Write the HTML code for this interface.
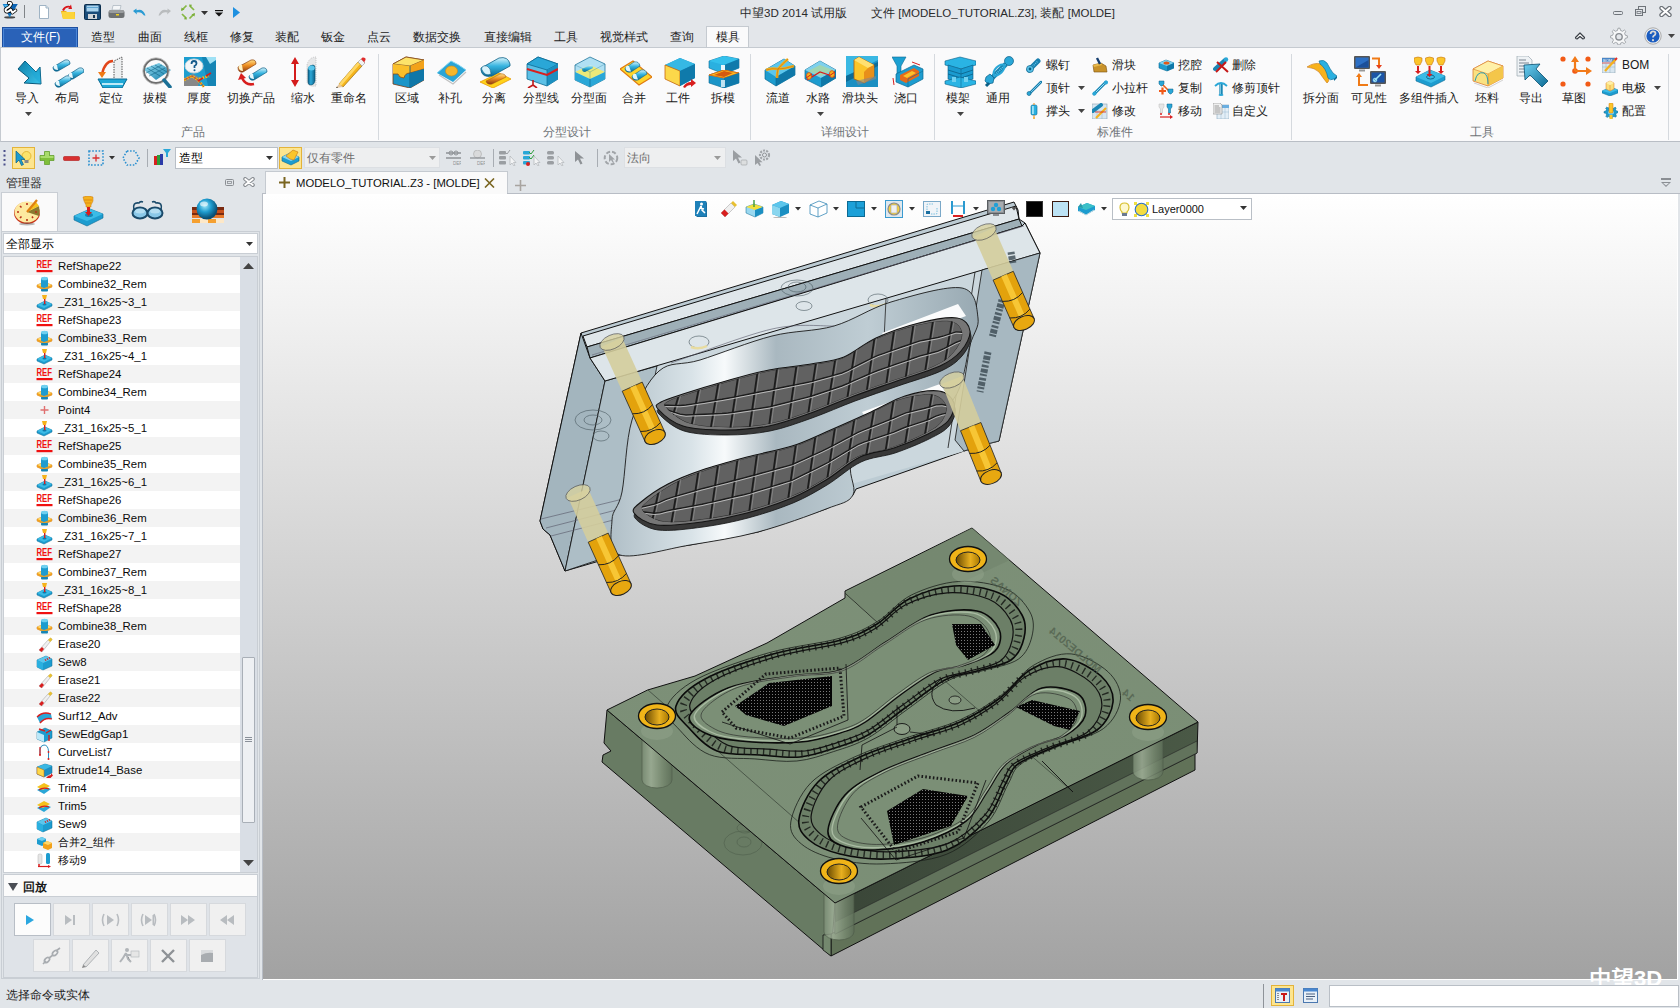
<!DOCTYPE html>
<html><head><meta charset="utf-8">
<style>

*{box-sizing:border-box;margin:0;padding:0}
html,body{width:1680px;height:1008px;overflow:hidden;background:#e1e5e9;font-family:"Liberation Sans",sans-serif;font-size:12px;color:#1e1e1e}
.a{position:absolute}
.t{position:absolute;white-space:nowrap;line-height:14px}
#title{left:0;top:0;width:1680px;height:26px;background:#e3e6ea}
#menu{left:0;top:26px;width:1680px;height:21px;background:#e3e6ea}
#ribbon{left:0;top:47px;width:1680px;height:95px;background:#fafafb;border-top:1px solid #c5cad0;border-bottom:1px solid #b9bec5;border-left:1px solid #c5cad0}
.sep{position:absolute;top:6px;width:1px;height:86px;background:#d5d9de}
.lbl{position:absolute;white-space:nowrap;line-height:14px;color:#1a1a1a}
.glbl{position:absolute;white-space:nowrap;line-height:14px;color:#6f7377;top:77px}
#tb{left:0;top:142px;width:1680px;height:30px;background:#e1e5e9}
#mgr{left:0;top:172px;width:262px;height:808px;background:#e1e5e9}
#doc{left:262px;top:172px;width:1418px;height:22px;background:#e1e5e9}
#vp{left:263px;top:194px;width:1415px;height:786px;background:linear-gradient(#ffffff 0%,#a2a2a2 100%)}
#status{left:0;top:980px;width:1680px;height:28px;background:#e1e5e9}
.row{position:absolute;left:5px;width:234px;height:18px}
.row span{position:absolute;left:53px;top:2px;line-height:14px}
.ic{position:absolute}

</style></head><body>
<div id="title" class="a">
<svg class="ic" style="left:0px;top:0px" width="22" height="22" viewBox="0 0 22 22">
<defs><linearGradient id="lg_logo" x1="0" y1="0" x2="1" y2="1"><stop offset="0" stop-color="#1a8ad8"/><stop offset=".5" stop-color="#0a5fb0"/><stop offset="1" stop-color="#30b8f0"/></linearGradient></defs>
<ellipse cx="9.7" cy="17.4" rx="5.5" ry="1.1" fill="#222" opacity=".8"/>
<path d="M2.6 3.9 L17.8 3.9 L9.6 17.6 Z" fill="url(#lg_logo)"/>
<path d="M4 5 L9 5 L7 9Z" fill="#5ad0ff" opacity=".7"/>
<path d="M8.6 3 Q10.8 2.4 11.2 3.8 Q10.8 5.5 8.8 7.2 Q6.5 8.2 5.5 9.6 Q5.2 11.5 7.2 11.8 Q9.5 11.2 10.8 9.4 L12.4 12.8 L15.6 10.2" fill="none" stroke="#000" stroke-width="3.4" stroke-linejoin="round" stroke-linecap="round"/>
<path d="M8.6 3 Q10.8 2.4 11.2 3.8 Q10.8 5.5 8.8 7.2 Q6.5 8.2 5.5 9.6 Q5.2 11.5 7.2 11.8 Q9.5 11.2 10.8 9.4 L12.4 12.8 L15.6 10.2" fill="none" stroke="#fff" stroke-width="1.9" stroke-linejoin="round" stroke-linecap="round"/>
</svg>
<div class="a" style="left:24px;top:5px;width:1px;height:13px;background:#808488"></div>
<svg class="ic" style="left:38px;top:5px" width="12" height="14" viewBox="0 0 12 14"><path d="M1.5 .5 H8 L10.5 3 V13.5 H1.5 Z" fill="#fff" stroke="#9fb3c4"/><path d="M8 .5 V3 H10.5" fill="#dfe8ef" stroke="#9fb3c4"/></svg>
<svg class="ic" style="left:60px;top:4px" width="16" height="16" viewBox="0 0 16 16"><path d="M1 7 H6 L7 8 H15 V15 H3 Z" fill="#f2b21a"/><path d="M1.5 8 H14.5 L15 15 H3 Z" fill="#fcd439"/><path d="M2 6 Q5 1 10 2 L11 .5 L12 5 L8 5 L9.5 3.6 Q5.5 3 4 7 Z" fill="#d8161b"/></svg>
<svg class="ic" style="left:84px;top:4px" width="17" height="16" viewBox="0 0 17 16"><rect x=".5" y=".5" width="16" height="15" rx="1" fill="#1a4c7a" stroke="#0b2d4c"/><rect x="2.5" y="1.5" width="12" height="6" fill="#a9d3ee"/><rect x="2.5" y="3" width="12" height="1" fill="#5fa5d3"/><rect x="4" y="10" width="9" height="5" fill="#d0d4d8"/><rect x="9" y="11" width="2" height="3" fill="#1a3550"/></svg>
<svg class="ic" style="left:108px;top:5px" width="17" height="14" viewBox="0 0 17 14"><path d="M5 .5 H13 L12 5 H4 Z" fill="#f4f6f8" stroke="#a8b2bc" stroke-width=".7"/><rect x=".5" y="5" width="16" height="8" rx="2.5" fill="#6e7173"/><rect x="1" y="5" width="15" height="3" rx="1.5" fill="#9a9d9f"/><rect x="8" y="9" width="3" height="1.5" fill="#f1d21e"/></svg>
<svg class="ic" style="left:132px;top:7px" width="15" height="9" viewBox="0 0 15 9"><path d="M1 4 L4.5 1.5 L4.5 3.3 Q11 1 13.5 8.5 L12 8.5 Q9 4 4.5 5.5 L5 7.5 Z" fill="#2a9bd3"/></svg>
<svg class="ic" style="left:157px;top:7px" width="15" height="9" viewBox="0 0 15 9"><path d="M14 4 L10.5 1.5 L10.5 3.3 Q4 1 1.5 8.5 L3 8.5 Q6 4 10.5 5.5 L10 7.5 Z" fill="#b9bcbe"/></svg>
<svg class="ic" style="left:179px;top:3px" width="18" height="18" viewBox="0 0 18 18"><g fill="none" stroke="#86b845" stroke-width="1.7"><path d="M3 7 L7.5 2.5"/><path d="M10.5 2.5 L15 7"/><path d="M15 11 L10.5 15.5"/><path d="M7.5 15.5 L3 11"/></g><g fill="#7aae38"><path d="M2 8 L2.5 4.5 L5.5 6.5Z"/><path d="M10 1.5 L13 1.8 L11.5 4.5Z"/><path d="M16 10 L15.5 13.5 L12.5 11.5Z"/><path d="M8 16.5 L5 16.2 L6.5 13.5Z"/></g></svg>
<svg class="ic" style="left:201px;top:11px" width="7" height="4"><path d="M0 0 H7 L3.5 4Z" fill="#333"/></svg>
<svg class="ic" style="left:215px;top:10px" width="8" height="7"><rect x="0" y="0" width="8" height="1.2" fill="#111"/><path d="M0 2.5 H8 L4 6.5Z" fill="#111"/></svg>
<svg class="ic" style="left:233px;top:7px" width="7" height="11"><path d="M0 0 L7 5.5 L0 11Z" fill="#1e90e0"/></svg>
<div class="t" style="left:740px;top:6px;color:#2a2a2a;font-size:11.6px">中望3D 2014 试用版</div>
<div class="t" style="left:871px;top:6px;color:#2a2a2a;font-size:11.5px">文件 [MODELO_TUTORIAL.Z3], 装配 [MOLDE]</div>
<svg class="ic" style="left:1612px;top:10px" width="12" height="6"><rect x="1.5" y="1.5" width="9" height="3" rx="1" fill="none" stroke="#6f747a"/></svg>
<svg class="ic" style="left:1634px;top:5px" width="12" height="12"><rect x="4.5" y="1.5" width="7" height="6" fill="none" stroke="#6f747a"/><rect x="1.5" y="4.5" width="7" height="6" fill="#e3e6ea" stroke="#6f747a"/><rect x="3" y="6.5" width="4" height="2" fill="none" stroke="#6f747a" stroke-width=".8"/></svg>
<svg class="ic" style="left:1659px;top:6px" width="13" height="11"><path d="M2.5 2 L10.5 9 M10.5 2 L2.5 9" stroke="#6f747a" stroke-width="4.4" stroke-linecap="round"/><path d="M2.5 2 L10.5 9 M10.5 2 L2.5 9" stroke="#fff" stroke-width="2" stroke-linecap="round"/></svg>
</div>
<div id="menu" class="a">
<div class="a" style="left:2px;top:1px;width:76px;height:21px;background:#2a62b8;border:1px solid #1d4fa0;border-bottom:none;box-shadow:inset 0 0 0 1px #4a86d8"></div>
<div class="t" style="left:21px;top:4px;color:#fff">文件(F)</div>
<div class="t" style="left:91px;top:4px;color:#222">造型</div>
<div class="t" style="left:138px;top:4px;color:#222">曲面</div>
<div class="t" style="left:184px;top:4px;color:#222">线框</div>
<div class="t" style="left:230px;top:4px;color:#222">修复</div>
<div class="t" style="left:275px;top:4px;color:#222">装配</div>
<div class="t" style="left:321px;top:4px;color:#222">钣金</div>
<div class="t" style="left:367px;top:4px;color:#222">点云</div>
<div class="t" style="left:413px;top:4px;color:#222">数据交换</div>
<div class="t" style="left:484px;top:4px;color:#222">直接编辑</div>
<div class="t" style="left:554px;top:4px;color:#222">工具</div>
<div class="t" style="left:600px;top:4px;color:#222">视觉样式</div>
<div class="t" style="left:670px;top:4px;color:#222">查询</div>
<div class="a" style="left:706px;top:0px;width:43px;height:22px;background:#fafafb;border:1px solid #c5cad0;border-bottom:none"></div>
<div class="t" style="left:716px;top:4px;color:#222">模具</div>
<svg class="ic" style="left:1574px;top:5px" width="12" height="9" viewBox="0 0 12 9"><path d="M1.5 6.5 L6 2 L10.5 6.5 Q10.5 8 9 8 L6 5.5 L3 8 Q1.5 8 1.5 6.5Z" fill="#fff" stroke="#3a3f46" stroke-width="1.2" stroke-linejoin="round"/></svg>
<svg class="ic" style="left:1610px;top:1px" width="18" height="18" viewBox="0 0 18 18"><g fill="#f6f7f8" stroke="#9a9ea3" stroke-width=".9"><path d="M8 1.2 H10 L10.5 3.4 L12.6 4.3 L14.4 3 L15.8 4.4 L14.6 6.3 L15.4 8.3 L17.4 8.8 V10.8 L15.3 11.3 L14.5 13.3 L15.7 15.2 L14.3 16.6 L12.4 15.4 L10.5 16.2 L10 18 H8 L7.5 16.2 L5.5 15.4 L3.6 16.6 L2.2 15.2 L3.4 13.3 L2.6 11.3 L.6 10.8 V8.8 L2.6 8.3 L3.4 6.3 L2.2 4.4 L3.6 3 L5.4 4.3 L7.5 3.4Z"/></g><circle cx="9" cy="9.8" r="3.2" fill="#e3e6ea" stroke="#8a8e93" stroke-width="1.4"/></svg>
<svg class="ic" style="left:1644px;top:1px" width="18" height="18" viewBox="0 0 18 18"><circle cx="9" cy="9" r="8.2" fill="#f0f0f0" stroke="#9a9a9a" stroke-width=".8"/><circle cx="9" cy="9" r="6.6" fill="#1a5cc0"/><path d="M6.6 7 Q6.6 4.4 9 4.4 Q11.5 4.4 11.5 6.6 Q11.5 8 9.8 8.8 Q9 9.3 9 10.6" fill="none" stroke="#d8d8d8" stroke-width="1.8"/><circle cx="9" cy="13.2" r="1.1" fill="#d8d8d8"/></svg>
<svg class="ic" style="left:1668px;top:8px" width="7" height="4"><path d="M0 0 H7 L3.5 4Z" fill="#444"/></svg>
</div>
<div id="ribbon" class="a">
<svg class="ic" style="left:14px;top:8px" width="32" height="32" viewBox="0 0 32 32"><defs><linearGradient id="g_imp" x1="0" y1="0" x2="1" y2="1"><stop offset="0" stop-color="#0f7fa8"/><stop offset="1" stop-color="#39c3ea"/></linearGradient></defs>
<path d="M3 13 L10 5 L21 16 L25 11 L26 28 L9 27 L14 22 Z" fill="url(#g_imp)" stroke="#0a5a7c" stroke-width="1"/><path d="M10 5 L21 16 L25 11 L26 28 L20 22Z" fill="#1aa5d6" opacity=".5"/></svg>
<div class="lbl" style="left:14px;top:43px">导入</div>
<svg class="ic" style="left:24px;top:64px" width="7" height="4"><path d="M0 0 H7 L3.5 4Z" fill="#444"/></svg>
<svg class="ic" style="left:51px;top:8px" width="32" height="32" viewBox="0 0 32 32"><defs><linearGradient id="g_cyl" x1="0" y1="0" x2="0" y2="1"><stop offset="0" stop-color="#d6f3fb"/><stop offset=".45" stop-color="#36b4e0"/><stop offset="1" stop-color="#0b6a94"/></linearGradient></defs>
<g stroke="#0b5f86" stroke-width=".7"><path d="M1 11 L13 4 Q18 3 18 8 L6 15 Q1 16 1 11Z" fill="url(#g_cyl)"/><path d="M16 19 L27 12 Q32 11 32 16 L21 23 Q16 24 16 19Z" fill="url(#g_cyl)"/><path d="M3 27 L14 20 Q19 19 19 24 L8 31 Q3 32 3 27Z" fill="url(#g_cyl)"/></g><g fill="#e8f8fd"><path d="M1.5 11 Q2 8 5 9 L6 14 Q2 14 1.5 11Z"/><path d="M16.5 19 Q17 16 20 17 L21 22 Q17 22 16.5 19Z"/><path d="M3.5 27 Q4 24 7 25 L8 30 Q4 30 3.5 27Z"/></g></svg>
<div class="lbl" style="left:54px;top:43px">布局</div>
<svg class="ic" style="left:95px;top:8px" width="32" height="32" viewBox="0 0 32 32"><path d="M2 23 H31 L26 32 H7 Z" fill="#1fa8d6" stroke="#0c6b93"/><rect x="6" y="27" width="21" height="2" fill="#bdeaf8"/><path d="M18 22 V5 L26 1 V22Z" fill="#eef0f1"/><path d="M18 22 V5 L26 1 V22" fill="none" stroke="#555" stroke-dasharray="1.5 1"/><path d="M17 5 Q9 5 6 18" fill="none" stroke="#e2461a" stroke-width="2.4"/><path d="M2 16 L6 22 L10 16Z" fill="#f07a16"/></svg>
<div class="lbl" style="left:98px;top:43px">定位</div>
<svg class="ic" style="left:139px;top:8px" width="32" height="32" viewBox="0 0 32 32"><defs><linearGradient id="g_bm" x1="0" y1="0" x2="1" y2="1"><stop offset="0" stop-color="#9ee3f7"/><stop offset="1" stop-color="#0e7aa6"/></linearGradient></defs>
<path d="M3 13 L19 7 L31 14 L16 24 Z" fill="url(#g_bm)"/><g stroke="#0a5f82" stroke-width=".7" opacity=".8"><path d="M7 12 L20 20 M11 10 L24 18 M15 9 L27 16 M6 17 L22 9 M9 20 L25 12"/></g><circle cx="16" cy="15" r="12" fill="none" stroke="#6e6e6e" stroke-width="2"/><circle cx="16" cy="15" r="13.3" fill="none" stroke="#b8b8b8" stroke-width=".8"/><path d="M24 24 L30 31" stroke="#1a6f96" stroke-width="3.5" stroke-linecap="round"/></svg>
<div class="lbl" style="left:142px;top:43px">拔模</div>
<svg class="ic" style="left:183px;top:8px" width="32" height="32" viewBox="0 0 32 32"><rect x="0" y="1" width="32" height="29" fill="#1d9ed0"/><path d="M18 1 H32 V30 H24Z" fill="#1585b5"/><path d="M22 1 L32 1 L32 4 L26 8Z" fill="#9fe1f5"/><path d="M0 22 L9 18 L16 22 L14 30 H0Z" fill="#888"/><ellipse cx="10" cy="10" rx="9" ry="7" fill="#f3f6f8" stroke="#c7d3da"/><path d="M7.5 8 Q7.5 5 10 5 Q12.5 5 12.5 7.5 Q12.5 9 10.5 10 V12" fill="none" stroke="#155a8a" stroke-width="1.8"/><circle cx="10.5" cy="14.3" r="1" fill="#155a8a"/><path d="M0 24 L8 20 L14 24 L20 31 M15 23 L25 20" fill="none" stroke="#f5c518" stroke-width="2.6" stroke-dasharray="2 1.3"/><path d="M0 24 L8 20 L14 24 L20 31" fill="none" stroke="#d23a1e" stroke-width=".8"/><path d="M14 25 L19 22 M22 20 L27 17" stroke="#d81e1e" stroke-width="1.6"/></svg>
<div class="lbl" style="left:186px;top:43px">厚度</div>
<svg class="ic" style="left:235px;top:8px" width="32" height="32" viewBox="0 0 32 32"><defs><linearGradient id="g_or" x1="0" y1="0" x2="0" y2="1"><stop offset="0" stop-color="#ffe08a"/><stop offset=".45" stop-color="#ee8f22"/><stop offset="1" stop-color="#8e3a10"/></linearGradient></defs>
<path d="M2 11 L15 4 Q20 3 20 8 L7 16 Q2 17 2 11Z" fill="url(#g_or)" stroke="#8a4010" stroke-width=".7"/><path d="M2.5 11 Q3 8 6 9 L7 15 Q3 15 2.5 11Z" fill="#fff3c8"/><path d="M13 20 L26 12 Q31 11 31 16 L18 24 Q13 25 13 20Z" fill="url(#g_cyl)" stroke="#0b5f86" stroke-width=".7"/><path d="M13.5 20 Q14 17 17 18 L18 23 Q14 23 13.5 20Z" fill="#e8f8fd"/><path d="M18 28 Q10 30 6 22" fill="none" stroke="#d81e1e" stroke-width="2.6"/><path d="M2 24 L5 17 L10 22Z" fill="#d81e1e"/></svg>
<div class="lbl" style="left:226px;top:43px">切换产品</div>
<svg class="ic" style="left:287px;top:8px" width="32" height="32" viewBox="0 0 32 32"><path d="M7 3 V29" stroke="#d41c1c" stroke-width="2"/><path d="M3 8 L7 1 L11 8Z M3 24 L7 31 L11 24Z" fill="#d41c1c"/><path d="M19 9 Q21 1 28 1 V30 Q20 31 19 26Z" fill="#e6e7e8" stroke="#aaa" stroke-width=".6" stroke-dasharray="1 1"/><defs><linearGradient id="g_cy2" x1="0" y1="0" x2="1" y2="0"><stop offset="0" stop-color="#0c5f86"/><stop offset=".4" stop-color="#2da8d8"/><stop offset="1" stop-color="#0c5f86"/></linearGradient></defs><path d="M20 13 Q21 9 25 9 Q27 9 27 12 V25 Q26 29 23 29 Q20 29 20 26Z" fill="url(#g_cy2)" stroke="#0a5272" stroke-width=".6"/><ellipse cx="23.5" cy="12" rx="3.3" ry="2.5" fill="#58c6ec"/></svg>
<div class="lbl" style="left:290px;top:43px">缩水</div>
<svg class="ic" style="left:333px;top:8px" width="32" height="32" viewBox="0 0 32 32"><path d="M5 28 L24 6 L28 10 L9 31 Z" fill="#f5b51c" stroke="#9b6a0c" stroke-width=".7"/><path d="M5 28 L24 6 L26 8 L7 30Z" fill="#ffd865"/><path d="M24 6 L27 3 L31 7 L28 10Z" fill="#f1f1f1" stroke="#999" stroke-width=".6"/><path d="M27 3 L28.5 1.5 Q30 1 31.5 2.5 Q32 4 30.5 5.5 L31 7Z" fill="#e02b2b"/><path d="M5 28 L9 31 L2 32 Z" fill="#e8c9a0"/><path d="M3 30.5 L2 32 L4 31.7Z" fill="#333"/></svg>
<div class="lbl" style="left:330px;top:43px">重命名</div>
<div class="glbl" style="left:180px">产品</div>
<div class="sep" style="left:377px"></div>
<svg class="ic" style="left:391px;top:8px" width="32" height="32" viewBox="0 0 32 32"><path d="M1 8 L14 1 L32 4 L32 24 L18 32 L1 28Z" fill="#1a95c8" stroke="#7a3a12" stroke-width=".8"/><path d="M1 8 L14 1 L32 4 L18 10Z" fill="#fde36a" stroke="#8b4a16" stroke-width=".8"/><path d="M1 8 L18 10 L18 17 Q13 17 12 22 Q7 22 6 18 Q3 18 1 18Z" fill="#fbbf2a"/><path d="M18 10 L32 4 V13 L18 17Z" fill="#f2a21a"/><path d="M1 18 Q3 18 6 18 Q7 22 12 22 Q13 17 18 17 L32 13" fill="none" stroke="#8b4a16" stroke-width=".8"/><path d="M18 10 V32" stroke="#0b5477" stroke-width=".8"/><path d="M18 32 L32 24 V13 L18 17Z" fill="#0f77a8"/></svg>
<div class="lbl" style="left:394px;top:43px">区域</div>
<svg class="ic" style="left:435px;top:8px" width="32" height="32" viewBox="0 0 32 32"><path d="M1 17 L15 5 Q22 8 30 14 L17 26 Q10 22 1 17Z" fill="#2aa5d6"/><path d="M1 17 L15 5 Q22 8 30 14" fill="none" stroke="#7fd5f2" stroke-width="1"/><path d="M3 19 L17 28 L30 16" fill="none" stroke="#999" stroke-width="1.2" opacity=".6"/><ellipse cx="15.5" cy="15" rx="6" ry="5" fill="#f6b62a" stroke="#d48a10" stroke-width=".6"/></svg>
<div class="lbl" style="left:437px;top:43px">补孔</div>
<svg class="ic" style="left:479px;top:8px" width="32" height="32" viewBox="0 0 32 32"><path d="M0 26 L19 17 L31 23 L13 32Z" fill="#ffd21a" stroke="#e89a00" stroke-width=".8"/><path d="M6 25 L20 18 Q25 17 26 21 L12 28 Q7 29 6 25Z" fill="url(#g_or)" stroke="#9a4a10" stroke-width=".5"/><path d="M1 12 L19 2 Q28 0 30 8 L30 10 L12 20 Q2 22 1 14Z" fill="url(#g_cyl)" stroke="#0b5f86" stroke-width=".8"/><path d="M1.5 13 Q2 9 7 10 Q11 12 11 18 Q5 21 1.5 13Z" fill="#d8f2fb" stroke="#0b5f86" stroke-width=".6"/></svg>
<div class="lbl" style="left:481px;top:43px">分离</div>
<svg class="ic" style="left:525px;top:8px" width="32" height="32" viewBox="0 0 32 32"><path d="M1 8 L12 1 L32 8 L32 23 L21 30 L1 23Z" fill="#5bc0e6" stroke="#0c6a93" stroke-width=".8"/><path d="M1 8 L12 1 L32 8 L21 14Z" fill="#2aa7d7" stroke="#0c6a93" stroke-width=".8"/><path d="M21 14 L32 8 V23 L21 30Z" fill="#1b8fc0"/><path d="M21 14 V30" stroke="#0c6a93" stroke-width=".7"/><path d="M1 13 L21 19 L32 13" fill="none" stroke="#d81e1e" stroke-width="2"/><path d="M7 24 V29 M7 29 L2 32 M7 29 L11 32" stroke="#c01b1b" stroke-width="1.6"/></svg>
<div class="lbl" style="left:522px;top:43px">分型线</div>
<svg class="ic" style="left:573px;top:8px" width="32" height="32" viewBox="0 0 32 32"><path d="M1 9 L16 1 L31 8 V23 L16 31 L1 24Z" fill="#a8def3" stroke="#0c6a93" stroke-width=".8" opacity=".9"/><path d="M1 16 L16 9 L31 16 L16 23Z" fill="#f3ea6a" opacity=".9"/><path d="M1 16 L16 23 L31 16 V23 L16 31 L1 24Z" fill="#2aa7d7"/><path d="M8 13 L16 9 Q19 9 19 12 L11 16 Q8 16 8 13Z" fill="url(#g_cyl)"/><path d="M16 23 V31" stroke="#0c6a93" stroke-width=".7"/><path d="M1 9 L16 16 L31 8 M16 16 V23" fill="none" stroke="#0c6a93" stroke-width=".5" opacity=".6"/></svg>
<div class="lbl" style="left:570px;top:43px">分型面</div>
<svg class="ic" style="left:619px;top:8px" width="32" height="32" viewBox="0 0 32 32"><path d="M0 13 L13 5 L32 21 L19 29Z" fill="#ffd42a" stroke="#e07a10" stroke-width="1.1"/><path d="M5 12 L14 6 Q19 5 20 10 L11 16 Q5 17 5 12Z" fill="url(#g_cyl)" stroke="#0b5f86" stroke-width=".6"/><path d="M5.5 12 Q6 9 9 10 L11 15.5 Q6 16 5.5 12Z" fill="#e0f6fc"/><path d="M12 20 L21 14 Q26 13 27 18 L18 24 Q12 25 12 20Z" fill="url(#g_cyl)" stroke="#0b5f86" stroke-width=".6"/><path d="M12.5 20 Q13 17 16 18 L18 23.5 Q13 24 12.5 20Z" fill="#e0f6fc"/></svg>
<div class="lbl" style="left:621px;top:43px">合并</div>
<svg class="ic" style="left:663px;top:8px" width="32" height="32" viewBox="0 0 32 32"><path d="M1 9 L16 2 L31 8 L31 22 L16 30 L1 22Z" fill="#1b95c8"/><path d="M1 9 L16 2 L31 8 L16 15Z" fill="#36b8e4"/><path d="M1 9 L16 15 V30 L1 23Z" fill="#fcd84a" stroke="#c8670e" stroke-width=".8"/><path d="M16 15 L31 8 V22 L16 30Z" fill="#0f7aab"/><path d="M19 31 Q22 26 27 26 L27 23 L32 27 L27 31 V29 Q23 29 21 32Z" fill="#d81e1e"/></svg>
<div class="lbl" style="left:665px;top:43px">工件</div>
<svg class="ic" style="left:707px;top:8px" width="32" height="32" viewBox="0 0 32 32"><path d="M1 5 L16 0 L31 3 V12 L16 18 L1 12Z" fill="#2ab0e0" stroke="#0c6a93" stroke-width=".6"/><path d="M1 5 L16 0 L31 3 L16 9Z" fill="#33c0ec"/><path d="M16 9 L31 3 V12 L16 18Z" fill="#0f7aab"/><path d="M1 19 L16 14 L31 17 V27 L16 32 L1 27Z" fill="#1b95c8" stroke="#0c6a93" stroke-width=".6"/><path d="M1 19 L16 14 L31 17 L16 22Z" fill="#ffc020" stroke="#e07010" stroke-width="1"/><path d="M6 19 L16 15 L25 17 L16 21Z" fill="#d45a10"/><path d="M16 22 L31 17 V27 L16 32Z" fill="#0f7aab"/><rect x="13" y="9" width="4" height="5" fill="#e9f6fb"/><rect x="13" y="24" width="4" height="7" fill="#e9f6fb" opacity=".8"/></svg>
<div class="lbl" style="left:710px;top:43px">拆模</div>
<div class="glbl" style="left:542px">分型设计</div>
<div class="sep" style="left:749px"></div>
<svg class="ic" style="left:763px;top:8px" width="32" height="32" viewBox="0 0 32 32"><path d="M1 14 L20 3 L31 10 V19 L12 30 L1 23Z" fill="#1d9ccf" stroke="#0c6a93" stroke-width=".7"/><path d="M1 14 L20 3 L31 10 L12 21Z" fill="#5cc6ec"/><path d="M12 21 L31 10 V19 L12 30Z" fill="#0f78a8"/><path d="M12 21 V30" stroke="#0c6a93" stroke-width=".6"/><path d="M2 14 Q8 12 14 13 Q18 8 24 3 M14 13 Q20 13 30 10 M14 13 Q13 18 13 22" fill="none" stroke="#f5b21c" stroke-width="2.6"/><path d="M2 14 Q8 12 14 13 Q18 8 24 3 M14 13 Q20 13 30 10 M14 13 Q13 18 13 22" fill="none" stroke="#b8640c" stroke-width=".5"/></svg>
<div class="lbl" style="left:765px;top:43px">流道</div>
<svg class="ic" style="left:803px;top:8px" width="32" height="32" viewBox="0 0 32 32"><path d="M1 14 L16 5 L32 14 V22 L17 31 L1 23Z" fill="#1d9ccf" stroke="#0c6a93" stroke-width=".7"/><path d="M1 14 L16 5 L32 14 L17 22Z" fill="#8ad6ef" opacity=".9"/><path d="M4 15 L16 9 L29 14 L17 20Z" fill="#b6d98a" opacity=".6"/><path d="M17 22 L32 14 V22 L17 31Z" fill="#0f78a8"/><path d="M3 24 L16 16 L31 21" fill="none" stroke="#d81e1e" stroke-width="1.2"/><ellipse cx="5" cy="20" rx="2.6" ry="3.4" fill="#f5b21c" stroke="#d8401a" stroke-width=".7"/><ellipse cx="28" cy="18" rx="2.6" ry="3.4" fill="#f5b21c" stroke="#d8401a" stroke-width=".7"/><path d="M2 22 L8 18 M25 20 L31 16" stroke="#d81e1e" stroke-width="1"/></svg>
<div class="lbl" style="left:805px;top:43px">水路</div>
<svg class="ic" style="left:816px;top:64px" width="7" height="4"><path d="M0 0 H7 L3.5 4Z" fill="#444"/></svg>
<svg class="ic" style="left:845px;top:8px" width="32" height="32" viewBox="0 0 32 32"><rect x="0" y="0" width="32" height="31" fill="#1b8fc2"/><path d="M0 0 H32 V4 L0 20Z" fill="#3ab8e3"/><path d="M0 20 L32 6 V10 L0 26Z" fill="#0c6c98"/><path d="M8 4 L13 1 L28 9 L28 21 L18 27 L8 23Z" fill="#fbc52a" stroke="#b05a0a" stroke-width=".8"/><path d="M8 4 L13 1 L28 9 L22 12Z" fill="#ffe070"/><path d="M22 12 L28 9 V21 L18 27 V16Z" fill="#e8901a"/><path d="M10 25 L30 20 V23 L12 29Z" fill="#888" opacity=".6"/></svg>
<div class="lbl" style="left:841px;top:43px">滑块头</div>
<svg class="ic" style="left:891px;top:8px" width="32" height="32" viewBox="0 0 32 32"><path d="M0 1 H14 L9 10 V22 H5 V10Z" fill="#1ba0d2" stroke="#0c6a93" stroke-width=".6"/><path d="M4 18 L22 9 L31 13 V23 L16 31 L4 26Z" fill="#1d9ccf" stroke="#0c6a93" stroke-width=".7"/><path d="M8 19 L22 12 L27 15 L27 20 L14 27 L8 24Z" fill="#e56a1a"/><path d="M11 20 L20 15 L24 17 L15 22Z" fill="#fbc02a"/><path d="M16 31 V23 L31 15" fill="none" stroke="#0c6a93" stroke-width=".6"/><path d="M20 6 L28 9 M1 22 L2 29" stroke="#d81e1e" stroke-width="1"/></svg>
<div class="lbl" style="left:893px;top:43px">浇口</div>
<div class="glbl" style="left:820px">详细设计</div>
<div class="sep" style="left:933px"></div>
<svg class="ic" style="left:943px;top:8px" width="32" height="32" viewBox="0 0 32 32"><path d="M1 5 L16 1 L32 5 V9 L17 13 L1 9Z" fill="#2ab4e4" stroke="#0b5f86" stroke-width=".6"/><path d="M4 9 L17 13 L29 9 V23 L17 27 L4 23Z" fill="#1a9bd0" stroke="#0b5f86" stroke-width=".6"/><path d="M4 14 L17 18 L29 14 M4 18 L17 22 L29 18" fill="none" stroke="#0b5f86" stroke-width=".8"/><path d="M1 25 L16 21 L32 25 V28 L17 32 L1 28Z" fill="#2ab4e4" stroke="#0b5f86" stroke-width=".6"/><rect x="8" y="21" width="4" height="5" fill="#6fd0f0"/><rect x="20" y="21" width="4" height="5" fill="#6fd0f0"/><path d="M17 13 V32" stroke="#0b5f86" stroke-width=".5"/></svg>
<div class="lbl" style="left:945px;top:43px">模架</div>
<svg class="ic" style="left:956px;top:64px" width="7" height="4"><path d="M0 0 H7 L3.5 4Z" fill="#444"/></svg>
<svg class="ic" style="left:983px;top:8px" width="32" height="32" viewBox="0 0 32 32"><path d="M4 26 L22 8" stroke="#1680ad" stroke-width="5"/><path d="M4 26 L22 8" stroke="#58c3ea" stroke-width="2" stroke-dasharray="1 1"/><circle cx="25" cy="5" r="4.5" fill="#2aa7d7" stroke="#0b5f86" stroke-width=".7"/><ellipse cx="15" cy="14" rx="7" ry="3.5" transform="rotate(-45 15 14)" fill="none" stroke="#2aa7d7" stroke-width="2"/><path d="M2 21 L6 18 L10 22 L9 27 L4 28 L1 25Z" fill="#2aa7d7" stroke="#0b5f86" stroke-width=".7"/><path d="M2 30 L5 27" stroke="#0b5f86" stroke-width="3"/></svg>
<div class="lbl" style="left:985px;top:43px">通用</div>
<svg class="ic" style="left:1025px;top:9px" width="16" height="16" viewBox="0 0 16 16"><path d="M3 13 L12 4" stroke="#1a7fae" stroke-width="5" stroke-linecap="round"/><path d="M5 11 L12 4" stroke="#5cc6ec" stroke-width="1.5" stroke-dasharray="1 1"/><circle cx="4" cy="12" r="3.5" fill="#5cc6ec" stroke="#0b5f86" stroke-width=".7"/><circle cx="4" cy="12" r="1.4" fill="#0b5f86"/></svg>
<div class="lbl" style="left:1045px;top:10px">螺钉</div>
<svg class="ic" style="left:1025px;top:32px" width="16" height="16" viewBox="0 0 16 16"><path d="M3 14 L15 2" stroke="#1a7fae" stroke-width="2.5" stroke-linecap="round"/><path d="M4 13 L15 2" stroke="#8ad8f2" stroke-width=".8"/><circle cx="3" cy="13.5" r="2" fill="#2aa7d7" stroke="#0b5f86" stroke-width=".6"/></svg>
<div class="lbl" style="left:1045px;top:33px">顶针</div>
<svg class="ic" style="left:1077px;top:38px" width="7" height="4"><path d="M0 0 H7 L3.5 4Z" fill="#444"/></svg>
<svg class="ic" style="left:1025px;top:55px" width="16" height="16" viewBox="0 0 16 16"><rect x="5" y="2" width="6" height="10" rx="1.5" fill="#2ab0e0" stroke="#0b6a94" stroke-width=".6"/><rect x="6.2" y="3" width="1.5" height="8" fill="#b8ecfa"/><path d="M8 0 V2 M8 12 V14" stroke="#e88a1a" stroke-width="1"/><circle cx="8" cy="15" r="1" fill="#f0a020"/></svg>
<div class="lbl" style="left:1045px;top:56px">撑头</div>
<svg class="ic" style="left:1077px;top:61px" width="7" height="4"><path d="M0 0 H7 L3.5 4Z" fill="#444"/></svg>
<svg class="ic" style="left:1091px;top:9px" width="16" height="16" viewBox="0 0 16 16"><path d="M1 8 L9 6 L14 9 L15 15 L2 15Z" fill="#c8922a" stroke="#7a5010" stroke-width=".6"/><path d="M1 8 L9 6 L10 8 L2 10Z" fill="#e8b84a"/><path d="M5 1 L8 7" stroke="#153e70" stroke-width="2.4"/></svg>
<div class="lbl" style="left:1111px;top:10px">滑块</div>
<svg class="ic" style="left:1091px;top:32px" width="16" height="16" viewBox="0 0 16 16"><path d="M2 14 L14 2" stroke="#1a86b4" stroke-width="3" stroke-linecap="round"/><path d="M3 13 L14 2" stroke="#9be0f6" stroke-width="1"/><circle cx="14" cy="2.5" r="2" fill="#2aa7d7"/><circle cx="2.5" cy="13.5" r="2" fill="#2aa7d7"/></svg>
<div class="lbl" style="left:1111px;top:33px">小拉杆</div>
<svg class="ic" style="left:1091px;top:55px" width="16" height="16" viewBox="0 0 16 16"><rect x="0" y="1" width="15" height="15" fill="#d8e6f0" stroke="#8aa0b0" stroke-width=".6"/><path d="M0 8 H15 M5 8 V16 M10 8 V16" stroke="#9ab0c0" stroke-width=".5"/><path d="M1 8 L9 2" stroke="#1a86b4" stroke-width="4" stroke-linecap="round"/><path d="M4 15 L14 5" stroke="#f5b21c" stroke-width="2.2"/><path d="M3 9 H14" stroke="#d81e1e" stroke-width=".8"/></svg>
<div class="lbl" style="left:1111px;top:56px">修改</div>
<svg class="ic" style="left:1157px;top:9px" width="16" height="16" viewBox="0 0 16 16"><path d="M1 6 L8 3 L16 6 V11 L9 14 L1 11Z" fill="#1d9ccf" stroke="#0c6a93" stroke-width=".6"/><path d="M1 6 L8 3 L16 6 L9 9Z" fill="#7fd3f0"/><ellipse cx="8.5" cy="6" rx="3" ry="1.6" fill="#e05a1a"/><path d="M9 9 L16 6 V11 L9 14Z" fill="#0f78a8"/></svg>
<div class="lbl" style="left:1177px;top:10px">挖腔</div>
<svg class="ic" style="left:1157px;top:32px" width="16" height="16" viewBox="0 0 16 16"><path d="M3 3 L12 12" stroke="#e8601a" stroke-width="1.6"/><path d="M1 1 H6 V4 L4 6 H3 L1 4Z" fill="#2aa7d7" stroke="#0b5f86" stroke-width=".5"/><path d="M10 9 H15 V12 L13 14 H12 L10 12Z" fill="#2aa7d7" stroke="#0b5f86" stroke-width=".5"/><path d="M1 11 H8 M4.5 7.5 V14.5" stroke="#f05a1a" stroke-width="2.2"/></svg>
<div class="lbl" style="left:1177px;top:33px">复制</div>
<svg class="ic" style="left:1157px;top:55px" width="16" height="16" viewBox="0 0 16 16"><path d="M1 1 H6 V4 L4.5 6 V10 H2.5 V6 L1 4Z" fill="#e6e6e6" stroke="#b8b8b8" stroke-width=".5"/><path d="M9 1 H14 V4 L12.5 6 V10 H10.5 V6 L9 4Z" fill="#2aa7d7" stroke="#0b5f86" stroke-width=".5"/><circle cx="3" cy="11" r="1" fill="#d81e1e"/><circle cx="11" cy="11" r="1" fill="#d81e1e"/><path d="M2 14 H13" stroke="#d81e1e" stroke-width="1.2"/><path d="M12 12 L15 14 L12 16Z" fill="#d81e1e"/></svg>
<div class="lbl" style="left:1177px;top:56px">移动</div>
<svg class="ic" style="left:1212px;top:9px" width="16" height="16" viewBox="0 0 16 16"><path d="M2 12 L12 3" stroke="#1a86b4" stroke-width="4" stroke-linecap="round"/><circle cx="13" cy="2.5" r="2.2" fill="#2aa7d7"/><path d="M3 15 L13 5 M4 5 L15 15" stroke="#c41818" stroke-width="2"/></svg>
<div class="lbl" style="left:1231px;top:10px">删除</div>
<svg class="ic" style="left:1212px;top:32px" width="16" height="16" viewBox="0 0 16 16"><path d="M8 4 V15" stroke="#1a86b4" stroke-width="3.4"/><path d="M7.3 4 V15" stroke="#b0e8fa" stroke-width=".8"/><path d="M2 6 Q8 0 14 6" fill="none" stroke="#2aa7d7" stroke-width="1.8"/><ellipse cx="8" cy="15" rx="2.5" ry="1" fill="#2aa7d7"/></svg>
<div class="lbl" style="left:1231px;top:33px">修剪顶针</div>
<svg class="ic" style="left:1212px;top:55px" width="16" height="16" viewBox="0 0 16 16"><rect x="4" y="2" width="12" height="14" fill="#e3eef6" stroke="#8aa8c0" stroke-width=".6"/><rect x="4" y="2" width="12" height="3" fill="#6aaee0"/><path d="M4 9 H16 M8 5 V16 M12 5 V16" stroke="#9ab8d0" stroke-width=".5"/><path d="M0 0 H7 L9 2 V11 H0Z" fill="#f0f0f0" stroke="#8a8a8a" stroke-width=".6"/><path d="M1.5 3 H6 M1.5 5 H7.5 M1.5 7 H7.5 M1.5 9 H7.5" stroke="#777" stroke-width=".7"/></svg>
<div class="lbl" style="left:1231px;top:56px">自定义</div>
<div class="glbl" style="left:1096px">标准件</div>
<div class="sep" style="left:1290px"></div>
<svg class="ic" style="left:1305px;top:8px" width="32" height="32" viewBox="0 0 32 32"><path d="M1 11 Q8 6 15 8 Q20 11 22 20 Q24 25 21 27 Q17 22 13 16 Q9 12 1 11Z" fill="#f7b21c" stroke="#c87410" stroke-width=".6"/><path d="M13 5 Q18 3 21 7 Q24 13 27 17 L31 20 L28 23 Q24 25 22 22 Q20 12 14 8Z" fill="#2ab0e0" stroke="#0b6a94" stroke-width=".6"/><path d="M28 23 L31 20 V22 L28 25Z" fill="#0b6a94"/></svg>
<div class="lbl" style="left:1302px;top:43px">拆分面</div>
<svg class="ic" style="left:1353px;top:8px" width="32" height="32" viewBox="0 0 32 32"><rect x="0" y="0" width="16" height="13" fill="#555" rx="1"/><rect x="1.5" y="1.5" width="13" height="10" fill="#2c6fc4"/><path d="M1.5 11.5 L14.5 4 V11.5Z" fill="#1b4f9a"/><rect x="5" y="13.5" width="6" height="2" fill="#999"/><rect x="16" y="15" width="16" height="13" fill="#555" rx="1"/><rect x="17.5" y="16.5" width="13" height="10" fill="#1b54a6"/><path d="M20 25 L27 18" stroke="#9ee3f7" stroke-width="1.6"/><circle cx="21" cy="24" r="1.8" fill="none" stroke="#9ee3f7" stroke-width="1"/><rect x="21" y="28.5" width="6" height="2" fill="#999"/><path d="M18 2.5 H25 V10" fill="none" stroke="#f07a16" stroke-width="2"/><path d="M22 9 H28 L25 13Z" fill="#e8401a"/><path d="M14 29 H5 V20" fill="none" stroke="#f07a16" stroke-width="2"/><path d="M2 21 L5 17 L8 21Z" fill="#f07a16"/></svg>
<div class="lbl" style="left:1350px;top:43px">可见性</div>
<svg class="ic" style="left:1413px;top:8px" width="32" height="32" viewBox="0 0 32 32"><path d="M2 21 L16 14 L31 20 V24 L17 31 L2 25Z" fill="#1d9ccf" stroke="#0c6a93" stroke-width=".6"/><path d="M2 21 L16 14 L31 20 L17 27Z" fill="#3bbbe6"/><ellipse cx="16.5" cy="21" rx="4" ry="2" fill="none" stroke="#0c6a93" stroke-width="1"/><g fill="#fbc52a" stroke="#c87410" stroke-width=".6"><path d="M0 2 Q4 0 8 2 V5 L6 9 H2 L0 5Z"/><path d="M11.5 2 Q15.5 0 19.5 2 V5 L17.5 9 H13.5 L11.5 5Z"/><path d="M23 2 Q27 0 31 2 V5 L29 9 H25 L23 5Z"/></g><g fill="#d81e1e"><path d="M3 10 H5 V15 H7 L4 18 L1 15 H3Z"/><path d="M14.5 10 H16.5 V18 H18.5 L15.5 21 L12.5 18 H14.5Z"/><path d="M26 10 H28 V15 H30 L27 18 L24 15 H26Z"/></g></svg>
<div class="lbl" style="left:1398px;top:43px">多组件插入</div>
<svg class="ic" style="left:1471px;top:8px" width="32" height="32" viewBox="0 0 32 32"><path d="M1 13 L16 5 L31 10 V22 L16 30 L1 25Z" fill="#fbe07a" stroke="#d8782a" stroke-width=".8" opacity=".95"/><path d="M1 13 L16 5 L31 10 L16 18Z" fill="#fff0a8" stroke="#d8782a" stroke-width=".6"/><path d="M16 18 L31 10 V22 L16 30Z" fill="#f4c64a"/><path d="M16 18 V30" stroke="#d8782a" stroke-width=".6"/><path d="M3 25 Q5 15 12 17 Q16 19 16 28" fill="none" stroke="#2a9bb0" stroke-width="1"/><path d="M2 27 L16 32 L31 24" fill="none" stroke="#aaa" opacity=".5"/></svg>
<div class="lbl" style="left:1474px;top:43px">坯料</div>
<svg class="ic" style="left:1515px;top:8px" width="32" height="32" viewBox="0 0 32 32"><path d="M1 0 H12 L16 4 V20 H1Z" fill="#eef2f5" stroke="#9aa6b0" stroke-width=".7"/><path d="M3 4 H10 M3 7 H13 M3 10 H13 M3 13 H13 M3 16 H11" stroke="#7a8590" stroke-width="1"/><defs><linearGradient id="g_exp" x1="0" y1="0" x2="1" y2="1"><stop offset="0" stop-color="#6dd0f2"/><stop offset="1" stop-color="#0b6a94"/></linearGradient></defs><path d="M8 9 L24 8 L20 13 L32 25 L26 31 L14 19 L9 24Z" fill="url(#g_exp)" stroke="#0a4f70" stroke-width=".8"/></svg>
<div class="lbl" style="left:1518px;top:43px">导出</div>
<svg class="ic" style="left:1559px;top:8px" width="32" height="32" viewBox="0 0 32 32"><g fill="#f25a16"><circle cx="3" cy="3" r="2.6"/><circle cx="28" cy="3" r="2.6"/><circle cx="3" cy="28" r="2.6"/><circle cx="28" cy="28" r="2.6"/><circle cx="15" cy="15" r="2.8"/></g><path d="M15 15 V4 M15 15 H28" stroke="#f27a1a" stroke-width="2.2"/><path d="M11 6 L15 0 L19 6Z M26 11 L32 15 L26 19Z" fill="#f27a1a"/></svg>
<div class="lbl" style="left:1561px;top:43px">草图</div>
<svg class="ic" style="left:1601px;top:9px" width="16" height="16" viewBox="0 0 16 16"><rect x="0" y="1" width="13" height="15" fill="#d8e6f0" stroke="#8aa0b0" stroke-width=".6"/><rect x="0" y="1" width="13" height="4" fill="#4a86c8"/><text x="1" y="4.5" font-size="4" fill="#fff" font-family="Liberation Sans">BOM</text><path d="M0 6 H13" stroke="#d81e1e" stroke-width=".7"/><path d="M0 10 H13 M4 6 V16 M8 6 V16" stroke="#9ab0c0" stroke-width=".5"/><path d="M3 14 L14 2" stroke="#f5b21c" stroke-width="2.2"/><path d="M13 3 L15 1" stroke="#e02b2b" stroke-width="2"/></svg>
<div class="lbl" style="left:1621px;top:10px">BOM</div>
<svg class="ic" style="left:1601px;top:32px" width="16" height="16" viewBox="0 0 16 16"><path d="M0 11 L9 7 L16 10 V13 L8 16 L0 13Z" fill="#1d9ccf" stroke="#0c6a93" stroke-width=".5"/><path d="M0 11 L9 7 L16 10 L8 13Z" fill="#3bbbe6"/><path d="M4 3 L8 1 L12 3 V9 L8 11 L4 9Z" fill="#fbe07a" stroke="#d8782a" stroke-width=".5"/><path d="M4 3 L8 1 L12 3 L8 5Z" fill="#fff0a8"/><path d="M8 5 V11" stroke="#d8782a" stroke-width=".5"/></svg>
<div class="lbl" style="left:1621px;top:33px">电极</div>
<svg class="ic" style="left:1653px;top:38px" width="7" height="4"><path d="M0 0 H7 L3.5 4Z" fill="#444"/></svg>
<svg class="ic" style="left:1601px;top:55px" width="16" height="16" viewBox="0 0 16 16"><g fill="#1d9ccf" stroke="#0c6a93" stroke-width=".5"><path d="M8 3.5 L9.5 3.5 L10 5 L12 5.3 L13 4 L14.2 5 L13.5 6.5 L14.5 8 L16 8.3 V9.7 L14.5 10 L13.8 11.8 L14.6 13 L13.5 14.2 L12 13.4 L10.3 14.2 L10 16 H8.5 L8 14.2 L6.2 13.5 L5 14.5 L3.8 13.3 L4.6 12 L3.8 10.3 L2 10 V8.5 L3.8 8 L4.5 6.5 L3.6 5.2 L4.8 4 L6.2 5 Z"/></g><ellipse cx="9" cy="9.5" rx="3" ry="2" fill="#7fd3f0"/><rect x="7" y="0" width="4" height="10" rx="1" fill="#fbc52a" stroke="#c87410" stroke-width=".5"/><rect x="7.5" y="12" width="3" height="4" fill="#fbc52a"/></svg>
<div class="lbl" style="left:1621px;top:56px">配置</div>
<div class="glbl" style="left:1469px">工具</div>
<div class="sep" style="left:1667px"></div>
</div>
<div id="tb" class="a">
<svg class="ic" style="left:3px;top:8px" width="4" height="16"><g fill="#4a4f8a"><rect x="0.5" y="0" width="2" height="2"/><rect x="0.5" y="4.5" width="2" height="2"/><rect x="0.5" y="9" width="2" height="2"/><rect x="0.5" y="13.5" width="2" height="2"/></g></svg>
<div class="a" style="left:12px;top:5px;width:23px;height:22px;background:#fde58e;border:1px solid #e3b33a"></div>
<svg class="ic" style="left:15px;top:8px" width="18" height="17" viewBox="0 0 18 17"><circle cx="11.5" cy="6" r="4.5" fill="#fce36a" stroke="#d8a820" stroke-width=".7"/><rect x="9.5" y="10" width="4" height="3" fill="#888"/><path d="M1 1 L1 13 L4 10 L6.5 15.5 L8.5 14.5 L6 9.5 L10 9.5 Z" fill="#1d9ccf" stroke="#0b5f86" stroke-width=".7"/></svg>
<svg class="ic" style="left:39px;top:9px" width="16" height="14"><path d="M5.5 0.5 H10.5 V4.5 H15 V9.5 H10.5 V13.5 H5.5 V9.5 H1 V4.5 H5.5Z" fill="#7fbf3a" stroke="#5a9a22" stroke-width=".7"/><path d="M6 1 H10 V5 H14.5 V7 H1.5 V5 H6Z" fill="#a8dc6a"/></svg>
<svg class="ic" style="left:63px;top:14px" width="17" height="5"><rect x=".5" y=".5" width="16" height="4" rx="1" fill="#d83030" stroke="#b01818" stroke-width=".6"/></svg>
<svg class="ic" style="left:88px;top:8px" width="16" height="16"><rect x="1" y="1" width="14" height="14" fill="none" stroke="#2a8fcf" stroke-width="1.6" stroke-dasharray="1.6 1.6"/><path d="M8 4.5 V11.5 M4.5 8 H11.5" stroke="#d83030" stroke-width="1.3"/></svg>
<svg class="ic" style="left:109px;top:14px" width="6" height="4"><path d="M0 0 H6 L3 3.5Z" fill="#333"/></svg>
<svg class="ic" style="left:122px;top:8px" width="18" height="16"><path d="M5 1 H13 L17 8 L13 15 H5 L1 8Z" fill="none" stroke="#2a8fcf" stroke-width="1.6" stroke-dasharray="1.5 1.6"/></svg>
<div class="a" style="left:147px;top:7px;width:1px;height:18px;background:#a8adb3"></div>
<svg class="ic" style="left:154px;top:7px" width="17" height="17"><rect x="0" y="7" width="3" height="9" fill="#d82020"/><rect x="3" y="6" width="3" height="10" fill="#2c9e3a"/><rect x="6" y="5" width="3" height="11" fill="#2a3aa8"/><path d="M9 0 H17 L14 4 V8 H12 V4Z" fill="#2aa7d7"/></svg>
<div class="a" style="left:175px;top:5px;width:103px;height:22px;background:#fff;border:1px solid #b9bfc6"></div>
<div class="t" style="left:179px;top:9px;color:#000">造型</div>
<svg class="ic" style="left:266px;top:14px" width="7" height="4"><path d="M0 0 H7 L3.5 4Z" fill="#333"/></svg>
<div class="a" style="left:279px;top:5px;width:23px;height:22px;background:#fde58e;border:1px solid #e3b33a"></div>
<svg class="ic" style="left:281px;top:7px" width="19" height="18" viewBox="0 0 19 18"><path d="M1 8 L9 4 L18 8 V12 L10 16 L1 12Z" fill="#1d9ccf" stroke="#0c6a93" stroke-width=".6"/><path d="M1 8 L9 4 L18 8 L10 12Z" fill="#8ad6ef"/><path d="M5 7 L12 1 L17 3 L13 11 L9 10Z" fill="#fbc52a" stroke="#c87410" stroke-width=".6"/></svg>
<div class="a" style="left:304px;top:5px;width:136px;height:21px;background:#eeeff0;border:1px solid #dcdfe3"></div>
<div class="t" style="left:307px;top:9px;color:#6d6d6d">仅有零件</div>
<svg class="ic" style="left:429px;top:14px" width="7" height="4"><path d="M0 0 H7 L3.5 4Z" fill="#9a9a9a"/></svg>
<svg class="ic" style="left:446px;top:8px" width="15" height="16"><circle cx="5" cy="3" r="2" fill="none" stroke="#8e9296" stroke-width="1"/><circle cx="10" cy="3" r="2" fill="none" stroke="#8e9296" stroke-width="1"/><path d="M0 3 H15 M0 8 H15" stroke="#8e9296" stroke-width="1.3"/><text x="7" y="15" font-size="4.5" fill="#8e9296" font-family="Liberation Sans">DEF</text></svg>
<svg class="ic" style="left:470px;top:8px" width="15" height="16"><circle cx="7.5" cy="4" r="4" fill="#d9dadb" stroke="#aaa" stroke-width=".6"/><path d="M0 8 H15" stroke="#8e9296" stroke-width="1.3"/><text x="7" y="15" font-size="4.5" fill="#8e9296" font-family="Liberation Sans">DEF</text></svg>
<div class="a" style="left:493px;top:7px;width:1px;height:18px;background:#a8adb3"></div>
<svg class="ic" style="left:499px;top:8px" width="19" height="16"><g fill="#9a9ea2"><rect x="0" y="1" width="7" height="3.5" rx="1"/><rect x="0" y="6" width="7" height="3.5" rx="1"/><rect x="0" y="11" width="7" height="3.5" rx="1"/></g><path d="M6 2 L8 4 L11 0" fill="none" stroke="#9a9ea2" stroke-width="1"/><path d="M11 6 V15 L13 13 L15 16 L16 15.5 L14.5 12.5 L17 12.5Z" fill="#f3f4f5" stroke="#a8acb0" stroke-width=".6"/></svg>
<svg class="ic" style="left:523px;top:8px" width="19" height="16"><g fill="#2aa7d7"><rect x="0" y="1" width="7" height="3.5" rx="1"/><rect x="0" y="6" width="7" height="3.5" rx="1"/><rect x="0" y="11" width="7" height="3.5" rx="1"/></g><path d="M6 2 L8 4 L11 0 M6 7 L8 9 L11 5" fill="none" stroke="#2c9e3a" stroke-width="1"/><circle cx="5" cy="14" r="2" fill="#d82020"/><path d="M11 6 V15 L13 13 L15 16 L16 15.5 L14.5 12.5 L17 12.5Z" fill="#f3f4f5" stroke="#a8acb0" stroke-width=".6"/></svg>
<svg class="ic" style="left:547px;top:8px" width="19" height="16"><g fill="#9a9ea2"><rect x="0" y="1" width="7" height="3.5" rx="1.5"/><rect x="0" y="6" width="7" height="3.5" rx="1.5"/><rect x="0" y="11" width="7" height="3.5" rx="1.5"/></g><path d="M11 6 V15 L13 13 L15 16 L16 15.5 L14.5 12.5 L17 12.5Z" fill="#f3f4f5" stroke="#a8acb0" stroke-width=".6"/></svg>
<svg class="ic" style="left:575px;top:9px" width="10" height="14"><path d="M0 0 V11 L3 8.5 L5.5 13.5 L7.5 12.5 L5 7.5 L9 7.5Z" fill="#8e9296"/></svg>
<div class="a" style="left:597px;top:7px;width:1px;height:18px;background:#a8adb3"></div>
<svg class="ic" style="left:603px;top:8px" width="16" height="16"><circle cx="8" cy="8" r="6.3" fill="none" stroke="#a0a4a8" stroke-width="2" stroke-dasharray="4 2"/><path d="M6 4 V12 L8 10 L10 13 L11 12.5 L9.5 9.5 L12 9.5Z" fill="#a0a4a8"/></svg>
<div class="a" style="left:624px;top:5px;width:102px;height:21px;background:#eeeff0;border:1px solid #dcdfe3"></div>
<div class="t" style="left:627px;top:9px;color:#6d6d6d">法向</div>
<svg class="ic" style="left:714px;top:14px" width="7" height="4"><path d="M0 0 H7 L3.5 4Z" fill="#9a9a9a"/></svg>
<svg class="ic" style="left:733px;top:8px" width="15" height="16"><path d="M0 0 V11 L3 8.5 L5.5 13.5 L7.5 12.5 L5 7.5 L9 7.5Z" fill="#9a9ea2"/><rect x="8" y="10" width="6" height="5" rx="1" fill="#dcdedf" stroke="#9a9ea2" stroke-width=".6"/></svg>
<svg class="ic" style="left:755px;top:7px" width="16" height="17"><circle cx="9.5" cy="6" r="4.5" fill="none" stroke="#a0a4a8" stroke-width="2.2" stroke-dasharray="2 1.2"/><circle cx="9.5" cy="6" r="2" fill="none" stroke="#8e9296" stroke-width="1"/><path d="M0 6 V16 L2.5 14 L4.5 17 L6 16.3 L4.3 13.3 L7.5 13.3Z" fill="#9a9ea2"/></svg>
</div>
<div id="mgr" class="a">
<div class="t" style="left:6px;top:4px;color:#2a2a2a">管理器</div>
<svg class="ic" style="left:225px;top:7px" width="9" height="7"><rect x=".5" y=".5" width="8" height="6" rx="1" fill="none" stroke="#8a8e93"/><rect x="2.5" y="2.5" width="4" height="2" fill="none" stroke="#8a8e93" stroke-width=".8"/></svg>
<svg class="ic" style="left:243px;top:5px" width="12" height="10"><path d="M2.2 2 L9.8 8 M9.8 2 L2.2 8" stroke="#8a8e93" stroke-width="4" stroke-linecap="round"/><path d="M2.2 2 L9.8 8 M9.8 2 L2.2 8" stroke="#fff" stroke-width="1.8" stroke-linecap="round"/></svg>
<div class="a" style="left:1px;top:20px;width:57px;height:40px;background:#fafafa;border:1px solid #c9ced4;border-bottom:none"></div>
<svg class="ic" style="left:13px;top:24px" width="30" height="30" viewBox="0 0 30 30"><ellipse cx="14" cy="17" rx="13" ry="11" fill="#c8361a"/><ellipse cx="14" cy="16" rx="12.5" ry="10.5" fill="#fde9a0"/><path d="M14 16 L26 10 Q27 14 26 20Z" fill="#8a7a30"/><path d="M14 16 L23 6 L26 10Z" fill="#f5c21c"/><path d="M14 16 L24 4" stroke="#e08010" stroke-width="2.2"/><g stroke="#b8301a" stroke-width="1.6"><path d="M14 7 V9 M14 23 V25 M4 16 H6 M22 16 H24 M7 10 L8.5 11.5 M7 22 L8.5 20.5 M20 22 L19 20.5"/></g><ellipse cx="14" cy="28" rx="8" ry="1.5" fill="#555" opacity=".4"/></svg>
<svg class="ic" style="left:73px;top:24px" width="31" height="31" viewBox="0 0 31 31"><path d="M1 20 L17 13 L30 18 V22 L14 30 L1 24Z" fill="#1d9ccf" stroke="#0c6a93" stroke-width=".6"/><path d="M1 20 L17 13 L30 18 L14 25Z" fill="#3bbbe6"/><ellipse cx="16" cy="19" rx="4" ry="2" fill="#1585b5"/><path d="M10 1 Q15 -1 20 1 V5 Q19 7 18 9 V11 H13 V9 Q12 7 11 5Z" fill="#f5b21c" stroke="#c87410" stroke-width=".5"/><path d="M11 4 H19 M12 7 H18" stroke="#e08a12" stroke-width="1"/><path d="M14 11 H17 V16 H19 L15.5 20 L12 16 H14Z" fill="#d81e1e"/></svg>
<svg class="ic" style="left:130px;top:28px" width="35" height="22" viewBox="0 0 35 22"><path d="M4 10 Q2 2 9 3 Q10 1 13 2" fill="none" stroke="#1a4a6a" stroke-width="1.6"/><path d="M31 10 Q33 2 26 3 Q25 1 22 2" fill="none" stroke="#1a4a6a" stroke-width="1.6"/><ellipse cx="10" cy="13" rx="7.5" ry="5.5" fill="#8ac8e8" stroke="#1a4a6a" stroke-width="2"/><ellipse cx="25" cy="13" rx="7.5" ry="5.5" fill="#8ac8e8" stroke="#1a4a6a" stroke-width="2"/><path d="M16.5 12 Q17.5 10 18.5 12" fill="none" stroke="#1a4a6a" stroke-width="1.6"/><ellipse cx="10" cy="11" rx="5" ry="2.5" fill="#d0ecf8" opacity=".6"/><ellipse cx="25" cy="11" rx="5" ry="2.5" fill="#d0ecf8" opacity=".6"/></svg>
<svg class="ic" style="left:192px;top:24px" width="32" height="32" viewBox="0 0 32 32"><rect x="0" y="11" width="32" height="11" fill="#7a2a10"/><rect x="0" y="14" width="32" height="3" fill="#c8501a"/><rect x="0" y="19" width="32" height="3" fill="#e87a2a"/><rect x="0" y="23" width="8" height="4" fill="#f5a030"/><rect x="8" y="23" width="8" height="4" fill="#fde8c8"/><rect x="16" y="23" width="8" height="4" fill="#f5a030"/><rect x="24" y="23" width="8" height="4" fill="#fde8c8"/><defs><radialGradient id="g_sph" cx=".4" cy=".35" r=".6"><stop offset="0" stop-color="#9ee8fa"/><stop offset=".5" stop-color="#1e9ccf"/><stop offset="1" stop-color="#0a4f74"/></radialGradient></defs><circle cx="15" cy="13" r="10.5" fill="url(#g_sph)"/><ellipse cx="12" cy="8" rx="4" ry="2.5" fill="#fff" opacity=".6"/></svg>
<div class="a" style="left:1px;top:59px;width:259px;height:748px;border:1px solid #c9ced4;background:#e1e5e9"></div>
<div class="a" style="left:3px;top:61px;width:255px;height:21px;background:#fff;border:1px solid #c9ced4"></div>
<div class="t" style="left:6px;top:65px;color:#000">全部显示</div>
<svg class="ic" style="left:246px;top:70px" width="7" height="4"><path d="M0 0 H7 L3.5 4Z" fill="#333"/></svg>
<div class="a" style="left:3px;top:84px;width:255px;height:617px;background:#fff;border:1px solid #c9ced4;overflow:hidden">
<div class="a" style="left:0;top:0px;width:236px;height:18px;background:#f3f3f3"></div><svg class="ic" style="left:32px;top:1px" width="17" height="17" viewBox="0 0 17 17"><text x="0.5" y="10" font-size="11" font-weight="bold" fill="#f01010" font-family="Liberation Sans" textLength="15.5" lengthAdjust="spacingAndGlyphs">REF</text><rect x="0.5" y="12" width="16" height="2.2" fill="#f01010"/></svg><div class="t" style="left:54px;top:2px;color:#0a0a0a;font-size:11.4px">RefShape22</div>
<div class="a" style="left:0;top:18px;width:236px;height:18px;background:#ffffff"></div><svg class="ic" style="left:32px;top:19px" width="17" height="17" viewBox="0 0 17 17"><path d="M1 9 L8 6 L16 9 L16 11 L8 14 L1 11Z" fill="#f3b32a" stroke="#c8782a" stroke-width=".5"/><path d="M1 9 L8 6 L16 9 L8 12Z" fill="#ffd86a"/><rect x="5" y="1" width="7" height="14" rx="3" fill="#1d9ccf"/><ellipse cx="8.5" cy="2.5" rx="3.5" ry="1.8" fill="#6fd0f0"/><path d="M1 9 L8 12 L16 9 V11 L8 14 L1 11Z" fill="#f0a020" opacity=".9"/><rect x="5" y="13" width="7" height="2.5" rx="1" fill="#1585b5"/></svg><div class="t" style="left:54px;top:20px;color:#0a0a0a;font-size:11.4px">Combine32_Rem</div>
<div class="a" style="left:0;top:36px;width:236px;height:18px;background:#f3f3f3"></div><svg class="ic" style="left:32px;top:37px" width="17" height="17" viewBox="0 0 17 17"><path d="M1 11 L9 7 L16 10 V12 L8 16 L1 13Z" fill="#1d9ccf" stroke="#0c6a93" stroke-width=".5"/><path d="M1 11 L9 7 L16 10 L8 14Z" fill="#3bbbe6"/><ellipse cx="8.5" cy="10.5" rx="2" ry="1" fill="#0f78a8"/><path d="M6 1 H11 L10 5 H7Z" fill="#f5b21c"/><rect x="8" y="5" width="1.4" height="5" fill="#d81e1e"/></svg><div class="t" style="left:54px;top:38px;color:#0a0a0a;font-size:11.4px">_Z31_16x25~3_1</div>
<div class="a" style="left:0;top:54px;width:236px;height:18px;background:#ffffff"></div><svg class="ic" style="left:32px;top:55px" width="17" height="17" viewBox="0 0 17 17"><text x="0.5" y="10" font-size="11" font-weight="bold" fill="#f01010" font-family="Liberation Sans" textLength="15.5" lengthAdjust="spacingAndGlyphs">REF</text><rect x="0.5" y="12" width="16" height="2.2" fill="#f01010"/></svg><div class="t" style="left:54px;top:56px;color:#0a0a0a;font-size:11.4px">RefShape23</div>
<div class="a" style="left:0;top:72px;width:236px;height:18px;background:#f3f3f3"></div><svg class="ic" style="left:32px;top:73px" width="17" height="17" viewBox="0 0 17 17"><path d="M1 9 L8 6 L16 9 L16 11 L8 14 L1 11Z" fill="#f3b32a" stroke="#c8782a" stroke-width=".5"/><path d="M1 9 L8 6 L16 9 L8 12Z" fill="#ffd86a"/><rect x="5" y="1" width="7" height="14" rx="3" fill="#1d9ccf"/><ellipse cx="8.5" cy="2.5" rx="3.5" ry="1.8" fill="#6fd0f0"/><path d="M1 9 L8 12 L16 9 V11 L8 14 L1 11Z" fill="#f0a020" opacity=".9"/><rect x="5" y="13" width="7" height="2.5" rx="1" fill="#1585b5"/></svg><div class="t" style="left:54px;top:74px;color:#0a0a0a;font-size:11.4px">Combine33_Rem</div>
<div class="a" style="left:0;top:90px;width:236px;height:18px;background:#ffffff"></div><svg class="ic" style="left:32px;top:91px" width="17" height="17" viewBox="0 0 17 17"><path d="M1 11 L9 7 L16 10 V12 L8 16 L1 13Z" fill="#1d9ccf" stroke="#0c6a93" stroke-width=".5"/><path d="M1 11 L9 7 L16 10 L8 14Z" fill="#3bbbe6"/><ellipse cx="8.5" cy="10.5" rx="2" ry="1" fill="#0f78a8"/><path d="M6 1 H11 L10 5 H7Z" fill="#f5b21c"/><rect x="8" y="5" width="1.4" height="5" fill="#d81e1e"/></svg><div class="t" style="left:54px;top:92px;color:#0a0a0a;font-size:11.4px">_Z31_16x25~4_1</div>
<div class="a" style="left:0;top:108px;width:236px;height:18px;background:#f3f3f3"></div><svg class="ic" style="left:32px;top:109px" width="17" height="17" viewBox="0 0 17 17"><text x="0.5" y="10" font-size="11" font-weight="bold" fill="#f01010" font-family="Liberation Sans" textLength="15.5" lengthAdjust="spacingAndGlyphs">REF</text><rect x="0.5" y="12" width="16" height="2.2" fill="#f01010"/></svg><div class="t" style="left:54px;top:110px;color:#0a0a0a;font-size:11.4px">RefShape24</div>
<div class="a" style="left:0;top:126px;width:236px;height:18px;background:#ffffff"></div><svg class="ic" style="left:32px;top:127px" width="17" height="17" viewBox="0 0 17 17"><path d="M1 9 L8 6 L16 9 L16 11 L8 14 L1 11Z" fill="#f3b32a" stroke="#c8782a" stroke-width=".5"/><path d="M1 9 L8 6 L16 9 L8 12Z" fill="#ffd86a"/><rect x="5" y="1" width="7" height="14" rx="3" fill="#1d9ccf"/><ellipse cx="8.5" cy="2.5" rx="3.5" ry="1.8" fill="#6fd0f0"/><path d="M1 9 L8 12 L16 9 V11 L8 14 L1 11Z" fill="#f0a020" opacity=".9"/><rect x="5" y="13" width="7" height="2.5" rx="1" fill="#1585b5"/></svg><div class="t" style="left:54px;top:128px;color:#0a0a0a;font-size:11.4px">Combine34_Rem</div>
<div class="a" style="left:0;top:144px;width:236px;height:18px;background:#f3f3f3"></div><svg class="ic" style="left:32px;top:145px" width="17" height="17" viewBox="0 0 17 17"><path d="M8.5 4 V12 M4.5 8 H12.5" stroke="#e07070" stroke-width="1.4"/></svg><div class="t" style="left:54px;top:146px;color:#0a0a0a;font-size:11.4px">Point4</div>
<div class="a" style="left:0;top:162px;width:236px;height:18px;background:#ffffff"></div><svg class="ic" style="left:32px;top:163px" width="17" height="17" viewBox="0 0 17 17"><path d="M1 11 L9 7 L16 10 V12 L8 16 L1 13Z" fill="#1d9ccf" stroke="#0c6a93" stroke-width=".5"/><path d="M1 11 L9 7 L16 10 L8 14Z" fill="#3bbbe6"/><ellipse cx="8.5" cy="10.5" rx="2" ry="1" fill="#0f78a8"/><path d="M6 1 H11 L10 5 H7Z" fill="#f5b21c"/><rect x="8" y="5" width="1.4" height="5" fill="#d81e1e"/></svg><div class="t" style="left:54px;top:164px;color:#0a0a0a;font-size:11.4px">_Z31_16x25~5_1</div>
<div class="a" style="left:0;top:180px;width:236px;height:18px;background:#f3f3f3"></div><svg class="ic" style="left:32px;top:181px" width="17" height="17" viewBox="0 0 17 17"><text x="0.5" y="10" font-size="11" font-weight="bold" fill="#f01010" font-family="Liberation Sans" textLength="15.5" lengthAdjust="spacingAndGlyphs">REF</text><rect x="0.5" y="12" width="16" height="2.2" fill="#f01010"/></svg><div class="t" style="left:54px;top:182px;color:#0a0a0a;font-size:11.4px">RefShape25</div>
<div class="a" style="left:0;top:198px;width:236px;height:18px;background:#ffffff"></div><svg class="ic" style="left:32px;top:199px" width="17" height="17" viewBox="0 0 17 17"><path d="M1 9 L8 6 L16 9 L16 11 L8 14 L1 11Z" fill="#f3b32a" stroke="#c8782a" stroke-width=".5"/><path d="M1 9 L8 6 L16 9 L8 12Z" fill="#ffd86a"/><rect x="5" y="1" width="7" height="14" rx="3" fill="#1d9ccf"/><ellipse cx="8.5" cy="2.5" rx="3.5" ry="1.8" fill="#6fd0f0"/><path d="M1 9 L8 12 L16 9 V11 L8 14 L1 11Z" fill="#f0a020" opacity=".9"/><rect x="5" y="13" width="7" height="2.5" rx="1" fill="#1585b5"/></svg><div class="t" style="left:54px;top:200px;color:#0a0a0a;font-size:11.4px">Combine35_Rem</div>
<div class="a" style="left:0;top:216px;width:236px;height:18px;background:#f3f3f3"></div><svg class="ic" style="left:32px;top:217px" width="17" height="17" viewBox="0 0 17 17"><path d="M1 11 L9 7 L16 10 V12 L8 16 L1 13Z" fill="#1d9ccf" stroke="#0c6a93" stroke-width=".5"/><path d="M1 11 L9 7 L16 10 L8 14Z" fill="#3bbbe6"/><ellipse cx="8.5" cy="10.5" rx="2" ry="1" fill="#0f78a8"/><path d="M6 1 H11 L10 5 H7Z" fill="#f5b21c"/><rect x="8" y="5" width="1.4" height="5" fill="#d81e1e"/></svg><div class="t" style="left:54px;top:218px;color:#0a0a0a;font-size:11.4px">_Z31_16x25~6_1</div>
<div class="a" style="left:0;top:234px;width:236px;height:18px;background:#ffffff"></div><svg class="ic" style="left:32px;top:235px" width="17" height="17" viewBox="0 0 17 17"><text x="0.5" y="10" font-size="11" font-weight="bold" fill="#f01010" font-family="Liberation Sans" textLength="15.5" lengthAdjust="spacingAndGlyphs">REF</text><rect x="0.5" y="12" width="16" height="2.2" fill="#f01010"/></svg><div class="t" style="left:54px;top:236px;color:#0a0a0a;font-size:11.4px">RefShape26</div>
<div class="a" style="left:0;top:252px;width:236px;height:18px;background:#f3f3f3"></div><svg class="ic" style="left:32px;top:253px" width="17" height="17" viewBox="0 0 17 17"><path d="M1 9 L8 6 L16 9 L16 11 L8 14 L1 11Z" fill="#f3b32a" stroke="#c8782a" stroke-width=".5"/><path d="M1 9 L8 6 L16 9 L8 12Z" fill="#ffd86a"/><rect x="5" y="1" width="7" height="14" rx="3" fill="#1d9ccf"/><ellipse cx="8.5" cy="2.5" rx="3.5" ry="1.8" fill="#6fd0f0"/><path d="M1 9 L8 12 L16 9 V11 L8 14 L1 11Z" fill="#f0a020" opacity=".9"/><rect x="5" y="13" width="7" height="2.5" rx="1" fill="#1585b5"/></svg><div class="t" style="left:54px;top:254px;color:#0a0a0a;font-size:11.4px">Combine36_Rem</div>
<div class="a" style="left:0;top:270px;width:236px;height:18px;background:#ffffff"></div><svg class="ic" style="left:32px;top:271px" width="17" height="17" viewBox="0 0 17 17"><path d="M1 11 L9 7 L16 10 V12 L8 16 L1 13Z" fill="#1d9ccf" stroke="#0c6a93" stroke-width=".5"/><path d="M1 11 L9 7 L16 10 L8 14Z" fill="#3bbbe6"/><ellipse cx="8.5" cy="10.5" rx="2" ry="1" fill="#0f78a8"/><path d="M6 1 H11 L10 5 H7Z" fill="#f5b21c"/><rect x="8" y="5" width="1.4" height="5" fill="#d81e1e"/></svg><div class="t" style="left:54px;top:272px;color:#0a0a0a;font-size:11.4px">_Z31_16x25~7_1</div>
<div class="a" style="left:0;top:288px;width:236px;height:18px;background:#f3f3f3"></div><svg class="ic" style="left:32px;top:289px" width="17" height="17" viewBox="0 0 17 17"><text x="0.5" y="10" font-size="11" font-weight="bold" fill="#f01010" font-family="Liberation Sans" textLength="15.5" lengthAdjust="spacingAndGlyphs">REF</text><rect x="0.5" y="12" width="16" height="2.2" fill="#f01010"/></svg><div class="t" style="left:54px;top:290px;color:#0a0a0a;font-size:11.4px">RefShape27</div>
<div class="a" style="left:0;top:306px;width:236px;height:18px;background:#ffffff"></div><svg class="ic" style="left:32px;top:307px" width="17" height="17" viewBox="0 0 17 17"><path d="M1 9 L8 6 L16 9 L16 11 L8 14 L1 11Z" fill="#f3b32a" stroke="#c8782a" stroke-width=".5"/><path d="M1 9 L8 6 L16 9 L8 12Z" fill="#ffd86a"/><rect x="5" y="1" width="7" height="14" rx="3" fill="#1d9ccf"/><ellipse cx="8.5" cy="2.5" rx="3.5" ry="1.8" fill="#6fd0f0"/><path d="M1 9 L8 12 L16 9 V11 L8 14 L1 11Z" fill="#f0a020" opacity=".9"/><rect x="5" y="13" width="7" height="2.5" rx="1" fill="#1585b5"/></svg><div class="t" style="left:54px;top:308px;color:#0a0a0a;font-size:11.4px">Combine37_Rem</div>
<div class="a" style="left:0;top:324px;width:236px;height:18px;background:#f3f3f3"></div><svg class="ic" style="left:32px;top:325px" width="17" height="17" viewBox="0 0 17 17"><path d="M1 11 L9 7 L16 10 V12 L8 16 L1 13Z" fill="#1d9ccf" stroke="#0c6a93" stroke-width=".5"/><path d="M1 11 L9 7 L16 10 L8 14Z" fill="#3bbbe6"/><ellipse cx="8.5" cy="10.5" rx="2" ry="1" fill="#0f78a8"/><path d="M6 1 H11 L10 5 H7Z" fill="#f5b21c"/><rect x="8" y="5" width="1.4" height="5" fill="#d81e1e"/></svg><div class="t" style="left:54px;top:326px;color:#0a0a0a;font-size:11.4px">_Z31_16x25~8_1</div>
<div class="a" style="left:0;top:342px;width:236px;height:18px;background:#ffffff"></div><svg class="ic" style="left:32px;top:343px" width="17" height="17" viewBox="0 0 17 17"><text x="0.5" y="10" font-size="11" font-weight="bold" fill="#f01010" font-family="Liberation Sans" textLength="15.5" lengthAdjust="spacingAndGlyphs">REF</text><rect x="0.5" y="12" width="16" height="2.2" fill="#f01010"/></svg><div class="t" style="left:54px;top:344px;color:#0a0a0a;font-size:11.4px">RefShape28</div>
<div class="a" style="left:0;top:360px;width:236px;height:18px;background:#f3f3f3"></div><svg class="ic" style="left:32px;top:361px" width="17" height="17" viewBox="0 0 17 17"><path d="M1 9 L8 6 L16 9 L16 11 L8 14 L1 11Z" fill="#f3b32a" stroke="#c8782a" stroke-width=".5"/><path d="M1 9 L8 6 L16 9 L8 12Z" fill="#ffd86a"/><rect x="5" y="1" width="7" height="14" rx="3" fill="#1d9ccf"/><ellipse cx="8.5" cy="2.5" rx="3.5" ry="1.8" fill="#6fd0f0"/><path d="M1 9 L8 12 L16 9 V11 L8 14 L1 11Z" fill="#f0a020" opacity=".9"/><rect x="5" y="13" width="7" height="2.5" rx="1" fill="#1585b5"/></svg><div class="t" style="left:54px;top:362px;color:#0a0a0a;font-size:11.4px">Combine38_Rem</div>
<div class="a" style="left:0;top:378px;width:236px;height:18px;background:#ffffff"></div><svg class="ic" style="left:32px;top:379px" width="17" height="17" viewBox="0 0 17 17"><path d="M3 14 L12 4 L15 2 L16 4 L14 6 L6 16Z" fill="#f0f0f0" stroke="#9a9a9a" stroke-width=".5"/><path d="M12 4 L14.5 1.5 L16.5 3.5 L14 6Z" fill="#e8c030"/><path d="M3 14 L6 11 L8 13 L5.5 16Z" fill="#d81e1e"/></svg><div class="t" style="left:54px;top:380px;color:#0a0a0a;font-size:11.4px">Erase20</div>
<div class="a" style="left:0;top:396px;width:236px;height:18px;background:#f3f3f3"></div><svg class="ic" style="left:32px;top:397px" width="17" height="17" viewBox="0 0 17 17"><path d="M1 6 L10 2 L16 5 V12 L7 16 L1 13Z" fill="#1d9ccf" stroke="#0c6a93" stroke-width=".5"/><path d="M1 6 L10 2 L16 5 L7 9Z" fill="#5cc6ec"/><path d="M1 6 L7 9 V16 L1 13Z" fill="#2ab0e0"/><path d="M9 5 L10 7 M11 4 L12 6 M13 3 L14 5" stroke="#d81e1e" stroke-width="1"/></svg><div class="t" style="left:54px;top:398px;color:#0a0a0a;font-size:11.4px">Sew8</div>
<div class="a" style="left:0;top:414px;width:236px;height:18px;background:#ffffff"></div><svg class="ic" style="left:32px;top:415px" width="17" height="17" viewBox="0 0 17 17"><path d="M3 14 L12 4 L15 2 L16 4 L14 6 L6 16Z" fill="#f0f0f0" stroke="#9a9a9a" stroke-width=".5"/><path d="M12 4 L14.5 1.5 L16.5 3.5 L14 6Z" fill="#e8c030"/><path d="M3 14 L6 11 L8 13 L5.5 16Z" fill="#d81e1e"/></svg><div class="t" style="left:54px;top:416px;color:#0a0a0a;font-size:11.4px">Erase21</div>
<div class="a" style="left:0;top:432px;width:236px;height:18px;background:#f3f3f3"></div><svg class="ic" style="left:32px;top:433px" width="17" height="17" viewBox="0 0 17 17"><path d="M3 14 L12 4 L15 2 L16 4 L14 6 L6 16Z" fill="#f0f0f0" stroke="#9a9a9a" stroke-width=".5"/><path d="M12 4 L14.5 1.5 L16.5 3.5 L14 6Z" fill="#e8c030"/><path d="M3 14 L6 11 L8 13 L5.5 16Z" fill="#d81e1e"/></svg><div class="t" style="left:54px;top:434px;color:#0a0a0a;font-size:11.4px">Erase22</div>
<div class="a" style="left:0;top:450px;width:236px;height:18px;background:#ffffff"></div><svg class="ic" style="left:32px;top:451px" width="17" height="17" viewBox="0 0 17 17"><path d="M1 9 Q7 3 15 6 L16 11 Q9 9 4 15Z" fill="#2aa7d7"/><path d="M1 9 Q7 3 15 6 M4 15 Q9 9 16 11" fill="none" stroke="#d81e1e" stroke-width="1.3"/></svg><div class="t" style="left:54px;top:452px;color:#0a0a0a;font-size:11.4px">Surf12_Adv</div>
<div class="a" style="left:0;top:468px;width:236px;height:18px;background:#f3f3f3"></div><svg class="ic" style="left:32px;top:469px" width="17" height="17" viewBox="0 0 17 17"><path d="M1 6 L9 2 L16 5 V12 L8 16 L1 13Z" fill="#1d9ccf" stroke="#0c6a93" stroke-width=".5"/><path d="M1 6 L8 9 V16 L1 13Z" fill="#bde8f8"/><path d="M3 3 L9 5 M10 7 L15 4 M13 9 V15" stroke="#d81e1e" stroke-width="1.4"/></svg><div class="t" style="left:54px;top:470px;color:#0a0a0a;font-size:11.4px">SewEdgGap1</div>
<div class="a" style="left:0;top:486px;width:236px;height:18px;background:#ffffff"></div><svg class="ic" style="left:32px;top:487px" width="17" height="17" viewBox="0 0 17 17"><path d="M4 11 V5 Q5 1 8 1 Q12 1 12.5 7 V15" fill="none" stroke="#2a8fbf" stroke-width="1"/><path d="M4 3 V11" stroke="#d81e1e" stroke-width="1.2"/><circle cx="4" cy="11" r="1" fill="#d81e1e"/><circle cx="12.5" cy="15" r="1" fill="#d81e1e"/><circle cx="12.5" cy="8" r=".9" fill="#d81e1e"/></svg><div class="t" style="left:54px;top:488px;color:#0a0a0a;font-size:11.4px">CurveList7</div>
<div class="a" style="left:0;top:504px;width:236px;height:18px;background:#f3f3f3"></div><svg class="ic" style="left:32px;top:505px" width="17" height="17" viewBox="0 0 17 17"><path d="M1 5 L9 2 L16 4 V11 L8 15 L1 12Z" fill="#1b8fc2" stroke="#0c6a93" stroke-width=".5"/><path d="M1 5 L9 2 L16 4 L8 8Z" fill="#3ab8e3"/><path d="M1 5 L8 8 V15 L1 12Z" fill="#fcd84a" stroke="#c8670e" stroke-width=".5"/><path d="M10 16 Q12 13 15 13 V11 L17 13.5 L14.5 16Z" fill="#d81e1e"/></svg><div class="t" style="left:54px;top:506px;color:#0a0a0a;font-size:11.4px">Extrude14_Base</div>
<div class="a" style="left:0;top:522px;width:236px;height:18px;background:#ffffff"></div><svg class="ic" style="left:32px;top:523px" width="17" height="17" viewBox="0 0 17 17"><path d="M1 10 L8 6 L15 9 L8 14Z" fill="#2aa7d7"/><path d="M1 7 L8 3 L14 6 L7 10Z" fill="#f5c21c"/><path d="M3 10 Q7 7 13 9" fill="none" stroke="#d81e1e" stroke-width="1.2"/></svg><div class="t" style="left:54px;top:524px;color:#0a0a0a;font-size:11.4px">Trim4</div>
<div class="a" style="left:0;top:540px;width:236px;height:18px;background:#f3f3f3"></div><svg class="ic" style="left:32px;top:541px" width="17" height="17" viewBox="0 0 17 17"><path d="M1 10 L8 6 L15 9 L8 14Z" fill="#2aa7d7"/><path d="M1 7 L8 3 L14 6 L7 10Z" fill="#f5c21c"/><path d="M3 10 Q7 7 13 9" fill="none" stroke="#d81e1e" stroke-width="1.2"/></svg><div class="t" style="left:54px;top:542px;color:#0a0a0a;font-size:11.4px">Trim5</div>
<div class="a" style="left:0;top:558px;width:236px;height:18px;background:#ffffff"></div><svg class="ic" style="left:32px;top:559px" width="17" height="17" viewBox="0 0 17 17"><path d="M1 6 L10 2 L16 5 V12 L7 16 L1 13Z" fill="#1d9ccf" stroke="#0c6a93" stroke-width=".5"/><path d="M1 6 L10 2 L16 5 L7 9Z" fill="#5cc6ec"/><path d="M1 6 L7 9 V16 L1 13Z" fill="#2ab0e0"/><path d="M9 5 L10 7 M11 4 L12 6 M13 3 L14 5" stroke="#d81e1e" stroke-width="1"/></svg><div class="t" style="left:54px;top:560px;color:#0a0a0a;font-size:11.4px">Sew9</div>
<div class="a" style="left:0;top:576px;width:236px;height:18px;background:#f3f3f3"></div><svg class="ic" style="left:32px;top:577px" width="17" height="17" viewBox="0 0 17 17"><path d="M1 5 L6 3 L10 5 V10 L6 12 L1 10Z" fill="#1d9ccf"/><path d="M1 5 L6 3 L10 5 L6 7Z" fill="#6fd0f0"/><path d="M7 9 L11 7 L16 9 V14 L12 16 L7 14Z" fill="#f3a21a"/><path d="M7 9 L11 7 L16 9 L12 11Z" fill="#ffd86a"/></svg><div class="t" style="left:54px;top:578px;color:#0a0a0a;font-size:11.4px">合并2_组件</div>
<div class="a" style="left:0;top:594px;width:236px;height:18px;background:#ffffff"></div><svg class="ic" style="left:32px;top:595px" width="17" height="17" viewBox="0 0 17 17"><rect x="2" y="2" width="4" height="10" rx="1.5" fill="#e6e6e6" stroke="#b0b0b0" stroke-width=".5"/><rect x="10" y="1" width="4" height="11" rx="1.5" fill="#1d9ccf"/><path d="M2 14.5 H13" stroke="#d81e1e" stroke-width="1.2"/><path d="M12 13 L15 14.5 L12 16Z" fill="#d81e1e"/><circle cx="3" cy="13" r="1" fill="#d81e1e"/></svg><div class="t" style="left:54px;top:596px;color:#0a0a0a;font-size:11.4px">移动9</div>
<div class="a" style="left:236px;top:0;width:17px;height:615px;background:#d9dee5"></div><svg class="ic" style="left:239px;top:6px" width="11" height="6"><path d="M0 6 L5.5 0 L11 6Z" fill="#444"/></svg><svg class="ic" style="left:239px;top:603px" width="11" height="6"><path d="M0 0 H11 L5.5 6Z" fill="#444"/></svg><div class="a" style="left:238px;top:400px;width:13px;height:166px;background:#eef0f3;border:1px solid #a9afb7;border-radius:1px"></div><div class="a" style="left:241px;top:480px;width:7px;height:5px;border-top:1px solid #8a9099;border-bottom:1px solid #8a9099"></div><div class="a" style="left:241px;top:482px;width:7px;height:1px;background:#8a9099"></div></div>
<div class="a" style="left:3px;top:702px;width:255px;height:104px;border:1px solid #c9ced4;background:#dfe3e8"></div>
<div class="a" style="left:4px;top:703px;width:253px;height:22px;background:#fbfbfb;border-bottom:1px solid #c9ced4"></div>
<svg class="ic" style="left:8px;top:711px" width="10" height="8"><path d="M0 0 H10 L5 8Z" fill="#4a4e55"/></svg>
<div class="t" style="left:23px;top:708px;color:#1a1a1a;font-weight:bold">回放</div>
<div class="a" style="left:14px;top:731px;width:37px;height:33px;background:#fcfcfc;border:1px solid #b8bec6"></div><svg class="ic" style="left:16px;top:732px" width="32" height="32"><path d="M10 11 L18 16 L10 21Z" fill="#2aa7e0"/></svg>
<div class="a" style="left:53px;top:731px;width:37px;height:33px;background:#f0f0f0;border:1px solid #d6d9dd"></div><svg class="ic" style="left:55px;top:732px" width="32" height="32"><path d="M10 11 L17 16 L10 21Z" fill="#b8bcc0"/><rect x="18" y="11" width="2" height="10" fill="#b8bcc0"/></svg>
<div class="a" style="left:92px;top:731px;width:37px;height:33px;background:#f0f0f0;border:1px solid #d6d9dd"></div><svg class="ic" style="left:94px;top:732px" width="32" height="32"><path d="M13 11 L20 16 L13 21Z" fill="#b8bcc0"/><path d="M10 10 Q7 16 10 22 M23 10 Q26 16 23 22" fill="none" stroke="#b8bcc0" stroke-width="1.6"/></svg>
<div class="a" style="left:131px;top:731px;width:37px;height:33px;background:#f0f0f0;border:1px solid #d6d9dd"></div><svg class="ic" style="left:133px;top:732px" width="32" height="32"><path d="M12 11 L19 16 L12 21Z" fill="#b8bcc0"/><path d="M10 10 Q7 16 10 22 M21 10 Q24 16 21 22" fill="none" stroke="#b8bcc0" stroke-width="1.6"/><rect x="19.5" y="11" width="1.6" height="10" fill="#b8bcc0"/></svg>
<div class="a" style="left:170px;top:731px;width:37px;height:33px;background:#f0f0f0;border:1px solid #d6d9dd"></div><svg class="ic" style="left:172px;top:732px" width="32" height="32"><path d="M9 11 L16 16 L9 21Z M16 11 L23 16 L16 21Z" fill="#b8bcc0"/></svg>
<div class="a" style="left:209px;top:731px;width:37px;height:33px;background:#f0f0f0;border:1px solid #d6d9dd"></div><svg class="ic" style="left:211px;top:732px" width="32" height="32"><path d="M23 11 L16 16 L23 21Z M16 11 L9 16 L16 21Z" fill="#b8bcc0"/></svg>
<div class="a" style="left:33px;top:767px;width:37px;height:33px;background:#f0f0f0;border:1px solid #d6d9dd"></div><svg class="ic" style="left:35px;top:768px" width="32" height="32"><g fill="none" stroke="#a8acb0" stroke-width="1.6"><ellipse cx="12" cy="20" rx="3" ry="2" transform="rotate(-45 12 20)"/><ellipse cx="20" cy="13" rx="3" ry="2" transform="rotate(-45 20 13)"/><path d="M8 24 L11 21 M14 18 L18 15 M21 11 L25 8"/></g></svg>
<div class="a" style="left:72px;top:767px;width:37px;height:33px;background:#f0f0f0;border:1px solid #d6d9dd"></div><svg class="ic" style="left:74px;top:768px" width="32" height="32"><path d="M9 25 L22 10 L25 13 L12 27Z" fill="#e0e0e0" stroke="#a0a4a8" stroke-width=".8"/><path d="M9 25 L12 27 L8 28Z" fill="#888"/></svg>
<div class="a" style="left:111px;top:767px;width:37px;height:33px;background:#f0f0f0;border:1px solid #d6d9dd"></div><svg class="ic" style="left:113px;top:768px" width="32" height="32"><circle cx="14" cy="10" r="2" fill="#b0b4b8"/><path d="M13 13 L10 18 L7 22 M13 13 L15 19 L18 22 M11 15 L18 15" stroke="#b0b4b8" stroke-width="2"/><rect x="18" y="11" width="8" height="6" fill="#e6e6e6" stroke="#b0b4b8" stroke-width=".6"/></svg>
<div class="a" style="left:150px;top:767px;width:37px;height:33px;background:#f0f0f0;border:1px solid #d6d9dd"></div><svg class="ic" style="left:152px;top:768px" width="32" height="32"><path d="M10 10 L22 22 M22 10 L10 22" stroke="#8e9296" stroke-width="2.4"/></svg>
<div class="a" style="left:189px;top:767px;width:37px;height:33px;background:#f0f0f0;border:1px solid #d6d9dd"></div><svg class="ic" style="left:191px;top:768px" width="32" height="32"><rect x="10" y="10" width="12" height="12" fill="#a8acb0"/><path d="M10 10 H22 V13 Q16 12 10 15Z" fill="#d8dadc"/></svg>
</div>
<div id="doc" class="a">
<div class="a" style="left:3px;top:-1px;width:243px;height:23px;background:#fafafa;border:1px solid #c5cad0;border-bottom:none"></div>
<svg class="ic" style="left:17px;top:5px" width="11" height="11"><path d="M5.5 0 V11 M0 5.5 H11" stroke="#7a6520" stroke-width="2"/></svg>
<div class="t" style="left:34px;top:4px;color:#111;font-size:11.3px">MODELO_TUTORIAL.Z3 - [MOLDE]</div>
<svg class="ic" style="left:222px;top:6px" width="11" height="10"><path d="M1 .5 L10 9.5 M10 .5 L1 9.5" stroke="#7a6520" stroke-width="1.6"/></svg>
<svg class="ic" style="left:253px;top:8px" width="11" height="11"><path d="M5.5 0 V11 M0 5.5 H11" stroke="#a8a4a0" stroke-width="1.6"/></svg>
<svg class="ic" style="left:1399px;top:6px" width="10" height="10"><rect x="0" y="0" width="10" height="2" fill="#8a8e93"/><path d="M0 4 H10 L5 9Z" fill="#8a8e93"/><path d="M2 5 H8 L5 7.5Z" fill="#e1e5e9"/></svg>
</div>
<div id="vp" class="a" style="overflow:hidden;border-right:1px solid #fff;border-bottom:1px solid #fff"><svg class="a" style="left:0;top:0" width="1415" height="786" viewBox="263 194 1415 786"><defs>
<linearGradient id="wallg" x1="0" y1="0" x2="1" y2="0">
<stop offset="0" stop-color="#b0bfc7"/><stop offset=".22" stop-color="#d9e3e8"/><stop offset=".31" stop-color="#f7fafb"/><stop offset=".45" stop-color="#a9b8c0"/><stop offset=".7" stop-color="#bfcdd4"/><stop offset="1" stop-color="#98a9b2"/></linearGradient>
<linearGradient id="pinY" x1="0" y1="0" x2="1" y2="0">
<stop offset="0" stop-color="#b07800"/><stop offset=".35" stop-color="#f5c020"/><stop offset=".55" stop-color="#ffd84a"/><stop offset="1" stop-color="#c08a00"/></linearGradient>
<linearGradient id="pinT" x1="0" y1="0" x2="1" y2="0">
<stop offset="0" stop-color="#c8c49a"/><stop offset=".5" stop-color="#f3ecc0"/><stop offset="1" stop-color="#b8b48a"/></linearGradient>
<linearGradient id="bushg" x1="0" y1="0" x2="1" y2="0">
<stop offset="0" stop-color="#6a4a00"/><stop offset=".6" stop-color="#e8b020"/><stop offset="1" stop-color="#a87800"/></linearGradient>
</defs>
<polygon points="581.0,333.0 1014.0,202.0 1018.0,210.0 1019.0,219.0 1025.0,223.0 1040.0,253.0 999.0,441.0 991.0,443.0 964.0,451.0 856.0,489.0 853.0,495.0 826.0,509.0 758.0,532.0 690.0,545.0 620.0,555.0 565.0,571.0 550.0,535.0 543.0,529.0 540.0,521.0" fill="#bccbd3" stroke="#111" stroke-width="1"/>
<polygon points="605.0,381.0 1040.0,253.0 999.0,441.0 660.0,540.0" fill="#cbd7dd"/>
<polygon points="581.0,333.0 590.0,358.0 605.0,381.0 565.0,571.0 550.0,535.0 543.0,529.0 540.0,521.0" fill="#a3b5be" stroke="#111" stroke-width="1"/>
<polygon points="605.0,381.0 657.0,366.0 619.0,553.0 565.0,571.0" fill="#adbec6" stroke="#111" stroke-width=".8"/>
<path d="M541,519 L623,499 M546,528 L624,508 M551,536 L625,517" stroke="#556" stroke-width=".6" fill="none"/>
<polygon points="583.0,336.0 1016.0,206.0 1019.0,219.0 587.0,347.0" fill="#dfe6ea" stroke="#111" stroke-width="1"/>
<polygon points="587.0,347.0 1019.0,219.0 1022.0,226.0 590.0,358.0" fill="#9eafb7" stroke="#111" stroke-width="1"/>
<polygon points="590.0,358.0 1022.0,226.0 1025.0,223.0 1040.0,253.0 605.0,381.0" fill="#dde5e9" stroke="#111" stroke-width="1"/>
<line x1="592" y1="355" x2="1024" y2="226" stroke="#667" stroke-width=".6"/>
<polygon points="982.0,270.0 1040.0,253.0 999.0,441.0 991.0,443.0 964.0,451.0 955.0,440.0" fill="#a7b8c1" stroke="#111" stroke-width=".8"/>
<line x1="975" y1="272" x2="948" y2="448" stroke="#111" stroke-width=".8"/>
<path d="M1011 252 L1013 264 M1002 300 L992 338 M988 352 L980 392" stroke="#3b4a52" stroke-width="7" stroke-dasharray="2.5 1.5 4 1.2 2 2" opacity=".8"/>
<g fill="none" stroke="#4a5a62" stroke-width=".7" opacity=".85">
<ellipse cx="797" cy="288" rx="16" ry="8"/><ellipse cx="797" cy="287" rx="9" ry="5"/><ellipse cx="804" cy="306" rx="8" ry="4.5"/>
<ellipse cx="699" cy="342" rx="10" ry="6"/><ellipse cx="878" cy="300" rx="10" ry="6"/>
<ellipse cx="593" cy="420" rx="18" ry="10"/><ellipse cx="593" cy="420" rx="9" ry="5"/><ellipse cx="601" cy="436" rx="8" ry="5"/>
<ellipse cx="679" cy="438" rx="9" ry="5.5"/><ellipse cx="807" cy="424" rx="8" ry="5"/><ellipse cx="967" cy="306" rx="8" ry="5"/>
</g>
<path d="M691,347 Q699,350 707,346 M870,305 Q878,308 886,304 M671,443 Q679,446 687,442" stroke="#e8dca0" stroke-width="2.5" fill="none"/>
<path d="M622.0,492.0 C625.3,475.3 625.8,440.2 632.0,420.0 C638.2,399.8 647.7,381.0 659.0,371.0 C670.3,361.0 681.2,365.8 700.0,360.0 C718.8,354.2 749.7,341.7 772.0,336.0 C794.3,330.3 814.2,331.7 834.0,326.0 C853.8,320.3 869.7,308.3 891.0,302.0 C912.3,295.7 947.5,285.3 962.0,288.0 C976.5,290.7 976.7,308.5 978.0,318.0 C979.3,327.5 974.2,331.3 970.0,345.0 C965.8,358.7 964.7,384.2 953.0,400.0 C941.3,415.8 916.7,429.8 900.0,440.0 C883.3,450.2 860.8,451.8 853.0,461.0 C845.2,470.2 857.5,487.0 853.0,495.0 C848.5,503.0 841.8,502.8 826.0,509.0 C810.2,515.2 780.7,526.0 758.0,532.0 C735.3,538.0 713.0,541.2 690.0,545.0 C667.0,548.8 633.0,559.2 620.0,555.0 C607.0,550.8 611.7,530.5 612.0,520.0 C612.3,509.5 618.7,508.7 622.0,492.0 Z" fill="url(#wallg)" stroke="#1a1a1a" stroke-width=".9"/>
<path d="M671.0,363.0 C687.8,357.3 744.8,335.2 772.0,329.0 C799.2,322.8 823.7,326.5 834.0,326.0 " fill="none" stroke="#556" stroke-width=".6"/>
<path d="M886,299 L884,340 M853,461 L857,420" stroke="#222" stroke-width=".8" fill="none"/>
<path d="M659.0,414.0 C662.7,418.0 672.7,427.5 684.0,431.0 C695.3,434.5 712.7,435.0 727.0,435.0 C741.3,435.0 755.8,433.8 770.0,431.0 C784.2,428.2 797.8,423.0 812.0,418.0 C826.2,413.0 840.7,406.3 855.0,401.0 C869.3,395.7 883.7,391.0 898.0,386.0 C912.3,381.0 930.3,376.0 941.0,371.0 C951.7,366.0 957.0,361.8 962.0,356.0 C967.0,350.2 971.7,341.5 971.0,336.0 C970.3,330.5 966.5,324.3 958.0,323.0 C949.5,321.7 933.5,324.7 920.0,328.0 C906.5,331.3 889.5,337.3 877.0,343.0 C864.5,348.7 855.8,357.7 845.0,362.0 C834.2,366.3 824.5,366.8 812.0,369.0 C799.5,371.2 784.2,372.2 770.0,375.0 C755.8,377.8 741.3,382.0 727.0,386.0 C712.7,390.0 694.8,395.5 684.0,399.0 C673.2,402.5 666.2,404.5 662.0,407.0 C657.8,409.5 655.3,410.0 659.0,414.0 Z" fill="#383838" stroke="#111" stroke-width=".8"/>
<path d="M635.0,518.0 C637.7,521.8 646.7,528.5 658.0,530.0 C669.3,531.5 688.0,529.0 703.0,527.0 C718.0,525.0 733.0,522.0 748.0,518.0 C763.0,514.0 779.8,508.5 793.0,503.0 C806.2,497.5 815.7,491.8 827.0,485.0 C838.3,478.2 849.7,467.3 861.0,462.0 C872.3,456.7 883.7,456.8 895.0,453.0 C906.3,449.2 920.0,443.5 929.0,439.0 C938.0,434.5 944.7,431.2 949.0,426.0 C953.3,420.8 956.5,413.0 955.0,408.0 C953.5,403.0 948.2,397.2 940.0,396.0 C931.8,394.8 917.3,397.5 906.0,401.0 C894.7,404.5 885.2,411.0 872.0,417.0 C858.8,423.0 840.2,431.3 827.0,437.0 C813.8,442.7 806.2,446.8 793.0,451.0 C779.8,455.2 763.0,458.0 748.0,462.0 C733.0,466.0 716.2,470.5 703.0,475.0 C689.8,479.5 679.2,483.7 669.0,489.0 C658.8,494.3 647.7,502.2 642.0,507.0 C636.3,511.8 632.3,514.2 635.0,518.0 Z" fill="#383838" stroke="#111" stroke-width=".8"/>
<polygon points="882.0,333.0 958.0,304.0 966.0,316.0 890.0,345.0" fill="#ffffff" opacity=".95"/>
<polygon points="862.0,412.0 940.0,384.0 948.0,396.0 870.0,424.0" fill="#ffffff" opacity=".95"/>
<path d="M658.0,409.0 C661.7,413.0 671.7,422.5 683.0,426.0 C694.3,429.5 711.7,430.0 726.0,430.0 C740.3,430.0 754.8,428.8 769.0,426.0 C783.2,423.2 796.8,418.0 811.0,413.0 C825.2,408.0 839.7,401.3 854.0,396.0 C868.3,390.7 882.7,386.0 897.0,381.0 C911.3,376.0 929.3,371.0 940.0,366.0 C950.7,361.0 956.0,356.8 961.0,351.0 C966.0,345.2 970.7,336.5 970.0,331.0 C969.3,325.5 965.5,319.3 957.0,318.0 C948.5,316.7 932.5,319.7 919.0,323.0 C905.5,326.3 888.5,332.3 876.0,338.0 C863.5,343.7 854.8,352.7 844.0,357.0 C833.2,361.3 823.5,361.8 811.0,364.0 C798.5,366.2 783.2,367.2 769.0,370.0 C754.8,372.8 740.3,377.0 726.0,381.0 C711.7,385.0 693.8,390.5 683.0,394.0 C672.2,397.5 665.2,399.5 661.0,402.0 C656.8,404.5 654.3,405.0 658.0,409.0 Z" fill="#767676" stroke="#141414" stroke-width="1.1"/>
<clipPath id="sc0"><path d="M665.9,407.4 C669.4,411.2 678.9,420.3 689.7,423.6 C700.4,426.9 716.9,427.4 730.5,427.4 C744.1,427.4 757.9,426.3 771.4,423.6 C784.8,420.9 797.8,416.0 811.3,411.2 C824.7,406.5 838.5,400.2 852.1,395.1 C865.7,390.0 879.4,385.6 893.0,380.8 C906.6,376.1 923.7,371.3 933.8,366.6 C944.0,361.8 949.0,357.9 953.8,352.3 C958.5,346.8 963.0,338.6 962.3,333.3 C961.7,328.1 958.1,322.3 950.0,321.0 C941.9,319.7 926.7,322.6 913.9,325.7 C901.1,328.9 884.9,334.6 873.0,340.0 C861.2,345.4 852.9,353.9 842.6,358.0 C832.3,362.2 823.2,362.6 811.3,364.7 C799.4,366.7 784.8,367.7 771.4,370.4 C757.9,373.1 744.1,377.0 730.5,380.8 C716.9,384.6 700.0,389.9 689.7,393.2 C679.4,396.5 672.7,398.4 668.8,400.8 C664.8,403.2 662.4,403.6 665.9,407.4 Z"/></clipPath>
<g clip-path="url(#sc0)"><path d="M665.9,407.4 C669.4,411.2 678.9,420.3 689.7,423.6 C700.4,426.9 716.9,427.4 730.5,427.4 C744.1,427.4 757.9,426.3 771.4,423.6 C784.8,420.9 797.8,416.0 811.3,411.2 C824.7,406.5 838.5,400.2 852.1,395.1 C865.7,390.0 879.4,385.6 893.0,380.8 C906.6,376.1 923.7,371.3 933.8,366.6 C944.0,361.8 949.0,357.9 953.8,352.3 C958.5,346.8 963.0,338.6 962.3,333.3 C961.7,328.1 958.1,322.3 950.0,321.0 C941.9,319.7 926.7,322.6 913.9,325.7 C901.1,328.9 884.9,334.6 873.0,340.0 C861.2,345.4 852.9,353.9 842.6,358.0 C832.3,362.2 823.2,362.6 811.3,364.7 C799.4,366.7 784.8,367.7 771.4,370.4 C757.9,373.1 744.1,377.0 730.5,380.8 C716.9,384.6 700.0,389.9 689.7,393.2 C679.4,396.5 672.7,398.4 668.8,400.8 C664.8,403.2 662.4,403.6 665.9,407.4 Z" fill="#616161" stroke="#222" stroke-width=".8"/><path d="M671.0,421.8 L680.0,391.1" stroke="#1c1c1c" stroke-width="1.8"/><path d="M673.0,421.8 L682.0,391.1" stroke="#9a9a9a" stroke-width=".6"/><path d="M690.5,430.7 L699.5,385.0" stroke="#1c1c1c" stroke-width="1.8"/><path d="M692.5,430.7 L701.5,385.0" stroke="#9a9a9a" stroke-width=".6"/><path d="M710.0,432.5 L719.0,379.1" stroke="#1c1c1c" stroke-width="1.8"/><path d="M712.0,432.5 L721.0,379.1" stroke="#9a9a9a" stroke-width=".6"/><path d="M729.5,433.7 L738.5,373.8" stroke="#1c1c1c" stroke-width="1.8"/><path d="M731.5,433.7 L740.5,373.8" stroke="#9a9a9a" stroke-width=".6"/><path d="M749.0,431.9 L758.0,368.8" stroke="#1c1c1c" stroke-width="1.8"/><path d="M751.0,431.9 L760.0,368.8" stroke="#9a9a9a" stroke-width=".6"/><path d="M768.5,430.0 L777.5,364.8" stroke="#1c1c1c" stroke-width="1.8"/><path d="M770.5,430.0 L779.5,364.8" stroke="#9a9a9a" stroke-width=".6"/><path d="M788.0,424.1 L797.0,362.0" stroke="#1c1c1c" stroke-width="1.8"/><path d="M790.0,424.1 L799.0,362.0" stroke="#9a9a9a" stroke-width=".6"/><path d="M807.5,418.1 L816.5,358.8" stroke="#1c1c1c" stroke-width="1.8"/><path d="M809.5,418.1 L818.5,358.8" stroke="#9a9a9a" stroke-width=".6"/><path d="M827.0,410.7 L836.0,354.7" stroke="#1c1c1c" stroke-width="1.8"/><path d="M829.0,410.7 L838.0,354.7" stroke="#9a9a9a" stroke-width=".6"/><path d="M846.5,403.0 L855.5,346.2" stroke="#1c1c1c" stroke-width="1.8"/><path d="M848.5,403.0 L857.5,346.2" stroke="#9a9a9a" stroke-width=".6"/><path d="M866.0,395.8 L875.0,334.6" stroke="#1c1c1c" stroke-width="1.8"/><path d="M868.0,395.8 L877.0,334.6" stroke="#9a9a9a" stroke-width=".6"/><path d="M885.5,389.0 L894.5,327.5" stroke="#1c1c1c" stroke-width="1.8"/><path d="M887.5,389.0 L896.5,327.5" stroke="#9a9a9a" stroke-width=".6"/><path d="M905.0,382.2 L914.0,320.7" stroke="#1c1c1c" stroke-width="1.8"/><path d="M907.0,382.2 L916.0,320.7" stroke="#9a9a9a" stroke-width=".6"/><path d="M924.5,375.4 L933.5,317.5" stroke="#1c1c1c" stroke-width="1.8"/><path d="M926.5,375.4 L935.5,317.5" stroke="#9a9a9a" stroke-width=".6"/><path d="M944.0,367.1 L953.0,315.4" stroke="#1c1c1c" stroke-width="1.8"/><path d="M946.0,367.1 L955.0,315.4" stroke="#9a9a9a" stroke-width=".6"/><path d="M963.5,350.2 L972.5,326.0" stroke="#1c1c1c" stroke-width="1.8"/><path d="M965.5,350.2 L974.5,326.0" stroke="#9a9a9a" stroke-width=".6"/><polyline points="656.0,404.5 662.0,405.3 668.0,405.3 674.0,405.4 680.0,405.5 686.0,405.0 692.0,404.1 698.0,403.1 704.0,402.2 710.0,401.2 716.0,400.2 722.0,399.3 728.0,398.2 734.0,397.1 740.0,395.9 746.0,394.7 752.0,393.5 758.0,392.3 764.0,391.1 770.0,390.0 776.0,388.7 782.0,387.5 788.0,386.3 794.0,385.1 800.0,383.9 806.0,382.7 812.0,381.4 818.0,379.7 824.0,378.0 830.0,376.4 836.0,374.7 842.0,373.0 848.0,370.4 854.0,367.2 860.0,364.2 866.0,361.2 872.0,358.1 878.0,355.4 884.0,353.3 890.0,351.2 896.0,349.1 902.0,347.0 908.0,345.0 914.0,342.9 920.0,340.9 926.0,339.8 932.0,338.6 938.0,337.5 944.0,335.8 950.0,333.8 956.0,331.9 962.0,332.2 968.0,330.9 974.0,330.0" fill="none" stroke="#1c1c1c" stroke-width="1.4"/><polyline points="656.0,405.8 662.0,406.6 668.0,406.6 674.0,406.7 680.0,406.8 686.0,406.3 692.0,405.4 698.0,404.4 704.0,403.5 710.0,402.5 716.0,401.5 722.0,400.6 728.0,399.5 734.0,398.4 740.0,397.2 746.0,396.0 752.0,394.8 758.0,393.6 764.0,392.4 770.0,391.3 776.0,390.0 782.0,388.8 788.0,387.6 794.0,386.4 800.0,385.2 806.0,384.0 812.0,382.7 818.0,381.0 824.0,379.3 830.0,377.7 836.0,376.0 842.0,374.3 848.0,371.7 854.0,368.5 860.0,365.5 866.0,362.5 872.0,359.4 878.0,356.7 884.0,354.6 890.0,352.5 896.0,350.4 902.0,348.3 908.0,346.3 914.0,344.2 920.0,342.2 926.0,341.1 932.0,339.9 938.0,338.8 944.0,337.1 950.0,335.1 956.0,333.2 962.0,333.5 968.0,332.2 974.0,331.3" fill="none" stroke="#d0d0d0" stroke-width=".8"/><polyline points="656.0,406.6 662.0,408.3 668.0,410.2 674.0,412.2 680.0,414.1 686.0,415.0 692.0,414.7 698.0,414.5 704.0,414.3 710.0,414.0 716.0,413.8 722.0,413.5 728.0,413.0 734.0,412.2 740.0,411.3 746.0,410.4 752.0,409.5 758.0,408.6 764.0,407.7 770.0,406.7 776.0,405.2 782.0,403.7 788.0,402.2 794.0,400.6 800.0,399.1 806.0,397.6 812.0,396.0 818.0,394.0 824.0,392.0 830.0,390.0 836.0,388.0 842.0,386.0 848.0,383.5 854.0,380.7 860.0,378.1 866.0,375.5 872.0,372.9 878.0,370.5 884.0,368.4 890.0,366.3 896.0,364.2 902.0,362.1 908.0,360.1 914.0,358.0 920.0,355.9 926.0,354.4 932.0,352.8 938.0,351.2 944.0,348.6 950.0,345.6 956.0,342.5 962.0,340.1 968.0,334.0 974.0,330.0" fill="none" stroke="#1c1c1c" stroke-width="1.4"/><polyline points="656.0,407.9 662.0,409.6 668.0,411.5 674.0,413.5 680.0,415.4 686.0,416.3 692.0,416.0 698.0,415.8 704.0,415.6 710.0,415.3 716.0,415.1 722.0,414.8 728.0,414.3 734.0,413.5 740.0,412.6 746.0,411.7 752.0,410.8 758.0,409.9 764.0,409.0 770.0,408.0 776.0,406.5 782.0,405.0 788.0,403.5 794.0,401.9 800.0,400.4 806.0,398.9 812.0,397.3 818.0,395.3 824.0,393.3 830.0,391.3 836.0,389.3 842.0,387.3 848.0,384.8 854.0,382.0 860.0,379.4 866.0,376.8 872.0,374.2 878.0,371.8 884.0,369.7 890.0,367.6 896.0,365.5 902.0,363.4 908.0,361.4 914.0,359.3 920.0,357.2 926.0,355.7 932.0,354.1 938.0,352.5 944.0,349.9 950.0,346.9 956.0,343.8 962.0,341.4 968.0,335.3 974.0,331.3" fill="none" stroke="#d0d0d0" stroke-width=".8"/></g>
<path d="M634.0,513.0 C636.7,516.8 645.7,523.5 657.0,525.0 C668.3,526.5 687.0,524.0 702.0,522.0 C717.0,520.0 732.0,517.0 747.0,513.0 C762.0,509.0 778.8,503.5 792.0,498.0 C805.2,492.5 814.7,486.8 826.0,480.0 C837.3,473.2 848.7,462.3 860.0,457.0 C871.3,451.7 882.7,451.8 894.0,448.0 C905.3,444.2 919.0,438.5 928.0,434.0 C937.0,429.5 943.7,426.2 948.0,421.0 C952.3,415.8 955.5,408.0 954.0,403.0 C952.5,398.0 947.2,392.2 939.0,391.0 C930.8,389.8 916.3,392.5 905.0,396.0 C893.7,399.5 884.2,406.0 871.0,412.0 C857.8,418.0 839.2,426.3 826.0,432.0 C812.8,437.7 805.2,441.8 792.0,446.0 C778.8,450.2 762.0,453.0 747.0,457.0 C732.0,461.0 715.2,465.5 702.0,470.0 C688.8,474.5 678.2,478.7 668.0,484.0 C657.8,489.3 646.7,497.2 641.0,502.0 C635.3,506.8 631.3,509.2 634.0,513.0 Z" fill="#767676" stroke="#141414" stroke-width="1.1"/>
<clipPath id="sc1"><path d="M642.4,510.4 C644.9,514.0 653.5,520.3 664.2,521.8 C675.0,523.2 692.7,520.8 707.0,518.9 C721.2,517.0 735.5,514.2 749.7,510.4 C764.0,506.6 780.0,501.3 792.5,496.1 C805.0,490.9 814.0,485.5 824.8,479.0 C835.5,472.5 846.3,462.2 857.1,457.2 C867.8,452.1 878.6,452.3 889.4,448.6 C900.1,445.0 913.1,439.6 921.7,435.3 C930.2,431.0 936.6,427.9 940.7,423.0 C944.8,418.1 947.8,410.6 946.4,405.9 C945.0,401.1 939.9,395.6 932.1,394.5 C924.4,393.4 910.6,395.9 899.8,399.2 C889.1,402.5 880.0,408.7 867.5,414.4 C855.0,420.1 837.3,428.0 824.8,433.4 C812.3,438.8 805.0,442.8 792.5,446.7 C780.0,450.7 764.0,453.4 749.7,457.2 C735.5,461.0 719.5,465.2 707.0,469.5 C694.5,473.8 684.3,477.7 674.7,482.8 C665.0,487.9 654.4,495.3 649.0,499.9 C643.6,504.5 639.8,506.7 642.4,510.4 Z"/></clipPath>
<g clip-path="url(#sc1)"><path d="M642.4,510.4 C644.9,514.0 653.5,520.3 664.2,521.8 C675.0,523.2 692.7,520.8 707.0,518.9 C721.2,517.0 735.5,514.2 749.7,510.4 C764.0,506.6 780.0,501.3 792.5,496.1 C805.0,490.9 814.0,485.5 824.8,479.0 C835.5,472.5 846.3,462.2 857.1,457.2 C867.8,452.1 878.6,452.3 889.4,448.6 C900.1,445.0 913.1,439.6 921.7,435.3 C930.2,431.0 936.6,427.9 940.7,423.0 C944.8,418.1 947.8,410.6 946.4,405.9 C945.0,401.1 939.9,395.6 932.1,394.5 C924.4,393.4 910.6,395.9 899.8,399.2 C889.1,402.5 880.0,408.7 867.5,414.4 C855.0,420.1 837.3,428.0 824.8,433.4 C812.3,438.8 805.0,442.8 792.5,446.7 C780.0,450.7 764.0,453.4 749.7,457.2 C735.5,461.0 719.5,465.2 707.0,469.5 C694.5,473.8 684.3,477.7 674.7,482.8 C665.0,487.9 654.4,495.3 649.0,499.9 C643.6,504.5 639.8,506.7 642.4,510.4 Z" fill="#616161" stroke="#222" stroke-width=".8"/><path d="M651.0,525.9 L660.0,485.3" stroke="#1c1c1c" stroke-width="1.8"/><path d="M653.0,525.9 L662.0,485.3" stroke="#9a9a9a" stroke-width=".6"/><path d="M670.5,528.1 L679.5,475.3" stroke="#1c1c1c" stroke-width="1.8"/><path d="M672.5,528.1 L681.5,475.3" stroke="#9a9a9a" stroke-width=".6"/><path d="M690.0,526.8 L699.0,467.2" stroke="#1c1c1c" stroke-width="1.8"/><path d="M692.0,526.8 L701.0,467.2" stroke="#9a9a9a" stroke-width=".6"/><path d="M709.5,524.5 L718.5,461.2" stroke="#1c1c1c" stroke-width="1.8"/><path d="M711.5,524.5 L720.5,461.2" stroke="#9a9a9a" stroke-width=".6"/><path d="M729.0,520.6 L738.0,455.6" stroke="#1c1c1c" stroke-width="1.8"/><path d="M731.0,520.6 L740.0,455.6" stroke="#9a9a9a" stroke-width=".6"/><path d="M748.5,516.5 L757.5,450.4" stroke="#1c1c1c" stroke-width="1.8"/><path d="M750.5,516.5 L759.5,450.4" stroke="#9a9a9a" stroke-width=".6"/><path d="M768.0,510.0 L777.0,445.7" stroke="#1c1c1c" stroke-width="1.8"/><path d="M770.0,510.0 L779.0,445.7" stroke="#9a9a9a" stroke-width=".6"/><path d="M787.5,503.5 L796.5,440.1" stroke="#1c1c1c" stroke-width="1.8"/><path d="M789.5,503.5 L798.5,440.1" stroke="#9a9a9a" stroke-width=".6"/><path d="M807.0,494.1 L816.0,432.1" stroke="#1c1c1c" stroke-width="1.8"/><path d="M809.0,494.1 L818.0,432.1" stroke="#9a9a9a" stroke-width=".6"/><path d="M826.5,483.7 L835.5,423.8" stroke="#1c1c1c" stroke-width="1.8"/><path d="M828.5,483.7 L837.5,423.8" stroke="#9a9a9a" stroke-width=".6"/><path d="M846.0,470.5 L855.0,415.1" stroke="#1c1c1c" stroke-width="1.8"/><path d="M848.0,470.5 L857.0,415.1" stroke="#9a9a9a" stroke-width=".6"/><path d="M865.5,459.5 L874.5,406.4" stroke="#1c1c1c" stroke-width="1.8"/><path d="M867.5,459.5 L876.5,406.4" stroke="#9a9a9a" stroke-width=".6"/><path d="M885.0,454.4 L894.0,397.2" stroke="#1c1c1c" stroke-width="1.8"/><path d="M887.0,454.4 L896.0,397.2" stroke="#9a9a9a" stroke-width=".6"/><path d="M904.5,447.7 L913.5,390.8" stroke="#1c1c1c" stroke-width="1.8"/><path d="M906.5,447.7 L915.5,390.8" stroke="#9a9a9a" stroke-width=".6"/><path d="M924.0,439.6 L933.0,387.9" stroke="#1c1c1c" stroke-width="1.8"/><path d="M926.0,439.6 L935.0,387.9" stroke="#9a9a9a" stroke-width=".6"/><path d="M943.5,427.9 L952.5,396.3" stroke="#1c1c1c" stroke-width="1.8"/><path d="M945.5,427.9 L954.5,396.3" stroke="#9a9a9a" stroke-width=".6"/><path d="M963.0,406.0 L972.0,398.0" stroke="#1c1c1c" stroke-width="1.8"/><path d="M965.0,406.0 L974.0,398.0" stroke="#9a9a9a" stroke-width=".6"/><polyline points="636.0,506.3 642.0,507.0 648.0,505.6 654.0,504.2 660.0,502.1 666.0,499.4 672.0,497.3 678.0,495.6 684.0,493.9 690.0,492.2 696.0,490.4 702.0,488.7 708.0,487.2 714.0,485.6 720.0,484.1 726.0,482.6 732.0,481.0 738.0,479.5 744.0,477.9 750.0,476.3 756.0,474.7 762.0,473.0 768.0,471.4 774.0,469.7 780.0,468.0 786.0,466.4 792.0,464.7 798.0,462.0 804.0,459.3 810.0,456.5 816.0,453.8 822.0,451.1 828.0,448.2 834.0,445.1 840.0,441.9 846.0,438.7 852.0,435.6 858.0,432.4 864.0,429.8 870.0,427.5 876.0,425.2 882.0,422.8 888.0,420.4 894.0,418.0 900.0,415.3 906.0,412.8 912.0,411.4 918.0,409.9 924.0,408.5 930.0,406.9 936.0,404.9 942.0,404.5 948.0,405.8 954.0,402.5" fill="none" stroke="#1c1c1c" stroke-width="1.4"/><polyline points="636.0,507.6 642.0,508.3 648.0,506.9 654.0,505.5 660.0,503.4 666.0,500.7 672.0,498.6 678.0,496.9 684.0,495.2 690.0,493.5 696.0,491.7 702.0,490.0 708.0,488.5 714.0,486.9 720.0,485.4 726.0,483.9 732.0,482.3 738.0,480.8 744.0,479.2 750.0,477.6 756.0,476.0 762.0,474.3 768.0,472.7 774.0,471.0 780.0,469.3 786.0,467.7 792.0,466.0 798.0,463.3 804.0,460.6 810.0,457.8 816.0,455.1 822.0,452.4 828.0,449.5 834.0,446.4 840.0,443.2 846.0,440.0 852.0,436.9 858.0,433.7 864.0,431.1 870.0,428.8 876.0,426.5 882.0,424.1 888.0,421.7 894.0,419.3 900.0,416.6 906.0,414.1 912.0,412.7 918.0,411.2 924.0,409.8 930.0,408.2 936.0,406.2 942.0,405.8 948.0,407.1 954.0,403.8" fill="none" stroke="#d0d0d0" stroke-width=".8"/><polyline points="636.0,509.9 642.0,511.8 648.0,512.5 654.0,513.2 660.0,512.7 666.0,511.1 672.0,509.8 678.0,508.7 684.0,507.6 690.0,506.5 696.0,505.4 702.0,504.3 708.0,502.9 714.0,501.6 720.0,500.2 726.0,498.8 732.0,497.4 738.0,496.0 744.0,494.7 750.0,493.1 756.0,491.2 762.0,489.4 768.0,487.6 774.0,485.8 780.0,484.0 786.0,482.1 792.0,480.3 798.0,477.4 804.0,474.4 810.0,471.5 816.0,468.6 822.0,465.6 828.0,462.5 834.0,458.9 840.0,455.3 846.0,451.7 852.0,448.1 858.0,444.6 864.0,442.1 870.0,440.1 876.0,438.1 882.0,436.1 888.0,434.1 894.0,432.1 900.0,429.5 906.0,427.0 912.0,425.1 918.0,423.1 924.0,421.2 930.0,419.0 936.0,416.1 942.0,414.1 948.0,412.9 954.0,403.6" fill="none" stroke="#1c1c1c" stroke-width="1.4"/><polyline points="636.0,511.2 642.0,513.1 648.0,513.8 654.0,514.5 660.0,514.0 666.0,512.4 672.0,511.1 678.0,510.0 684.0,508.9 690.0,507.8 696.0,506.7 702.0,505.6 708.0,504.2 714.0,502.9 720.0,501.5 726.0,500.1 732.0,498.7 738.0,497.3 744.0,496.0 750.0,494.4 756.0,492.5 762.0,490.7 768.0,488.9 774.0,487.1 780.0,485.3 786.0,483.4 792.0,481.6 798.0,478.7 804.0,475.7 810.0,472.8 816.0,469.9 822.0,466.9 828.0,463.8 834.0,460.2 840.0,456.6 846.0,453.0 852.0,449.4 858.0,445.9 864.0,443.4 870.0,441.4 876.0,439.4 882.0,437.4 888.0,435.4 894.0,433.4 900.0,430.8 906.0,428.3 912.0,426.4 918.0,424.4 924.0,422.5 930.0,420.3 936.0,417.4 942.0,415.4 948.0,414.2 954.0,404.9" fill="none" stroke="#d0d0d0" stroke-width=".8"/></g>
<polygon points="602.0,346.5 622.2,391.2 642.2,382.1 622.0,337.5" fill="#d4cd9c" opacity=".9"/><ellipse cx="612" cy="342" rx="13" ry="7.050000000000001" transform="rotate(-24.353009175029626 612 342)" fill="#d8d2a0" stroke="#555" stroke-width=".8" opacity=".8"/><polygon points="622.2,391.2 645.0,441.5 665.0,432.5 642.2,382.1" fill="#e3a20c" stroke="#222" stroke-width=".8"/><polygon points="630.2,387.6 653.0,437.9 658.5,435.4 635.7,385.1" fill="#fbd040" opacity=".8"/><path d="M632.4,413.8 Q644.7,414.3 652.5,404.8" fill="none" stroke="#222" stroke-width="1"/><path d="M640.4,431.5 Q652.7,431.9 660.5,422.4" fill="none" stroke="#222" stroke-width="1"/><ellipse cx="655" cy="437" rx="11" ry="6.6" transform="rotate(-24.353009175029626 655 437)" fill="#e8a810" stroke="#222" stroke-width="1"/>
<polygon points="973.9,236.4 993.1,280.1 1013.3,271.3 994.1,227.6" fill="#d4cd9c" opacity=".9"/><ellipse cx="984" cy="232" rx="13" ry="7.050000000000001" transform="rotate(-23.72839107595253 984 232)" fill="#d8d2a0" stroke="#555" stroke-width=".8" opacity=".8"/><polygon points="993.1,280.1 1013.9,327.4 1034.1,318.6 1013.3,271.3" fill="#e3a20c" stroke="#222" stroke-width=".8"/><polygon points="1001.2,276.6 1022.0,323.9 1027.5,321.5 1006.7,274.1" fill="#fbd040" opacity=".8"/><path d="M1002.5,301.4 Q1014.8,302.0 1022.6,292.5" fill="none" stroke="#222" stroke-width="1"/><path d="M1009.8,318.0 Q1022.1,318.6 1029.9,309.1" fill="none" stroke="#222" stroke-width="1"/><ellipse cx="1024" cy="323" rx="11" ry="6.6" transform="rotate(-23.72839107595253 1024 323)" fill="#e8a810" stroke="#222" stroke-width="1"/>
<polygon points="568.0,497.5 588.2,542.2 608.2,533.1 588.0,488.5" fill="#d4cd9c" opacity=".9"/><ellipse cx="578" cy="493" rx="13" ry="7.050000000000001" transform="rotate(-24.353009175029626 578 493)" fill="#d8d2a0" stroke="#555" stroke-width=".8" opacity=".8"/><polygon points="588.2,542.2 611.0,592.5 631.0,583.5 608.2,533.1" fill="#e3a20c" stroke="#222" stroke-width=".8"/><polygon points="596.2,538.6 619.0,588.9 624.5,586.4 601.7,536.1" fill="#fbd040" opacity=".8"/><path d="M598.4,564.8 Q610.7,565.3 618.5,555.8" fill="none" stroke="#222" stroke-width="1"/><path d="M606.4,582.5 Q618.7,582.9 626.5,573.4" fill="none" stroke="#222" stroke-width="1"/><ellipse cx="621" cy="588" rx="11" ry="6.6" transform="rotate(-24.353009175029626 621 588)" fill="#e8a810" stroke="#222" stroke-width="1"/>
<polygon points="941.8,384.1 960.5,430.7 980.9,422.5 962.2,375.9" fill="#d4cd9c" opacity=".9"/><ellipse cx="952" cy="380" rx="13" ry="7.050000000000001" transform="rotate(-21.903178081839158 952 380)" fill="#d8d2a0" stroke="#555" stroke-width=".8" opacity=".8"/><polygon points="960.5,430.7 980.8,481.1 1001.2,472.9 980.9,422.5" fill="#e3a20c" stroke="#222" stroke-width=".8"/><polygon points="968.7,427.4 989.0,477.8 994.6,475.6 974.3,425.1" fill="#fbd040" opacity=".8"/><path d="M969.6,453.4 Q981.9,454.4 990.1,445.2" fill="none" stroke="#222" stroke-width="1"/><path d="M976.7,471.0 Q989.0,472.0 997.1,462.8" fill="none" stroke="#222" stroke-width="1"/><ellipse cx="991" cy="477" rx="11" ry="6.6" transform="rotate(-21.903178081839158 991 477)" fill="#e8a810" stroke="#222" stroke-width="1"/>
<pattern id="meshp" width="3" height="3" patternUnits="userSpaceOnUse"><rect width="3" height="3" fill="#050505"/><rect x="1" y="1" width="1" height="1" fill="#7a7a7a"/></pattern>
<polygon points="607.0,710.0 835.0,903.0 831.0,956.0 602.0,762.0 603.0,755.0 611.0,751.0 604.0,743.0" fill="#687b63" stroke="#111" stroke-width="1"/>
<g fill="none" stroke="#4f5e4c" stroke-width=".7" opacity=".8"><ellipse cx="743" cy="843" rx="19" ry="12"/><ellipse cx="744" cy="842" rx="7" ry="5"/><ellipse cx="745" cy="828" rx="8" ry="5"/></g>
<polygon points="831.0,934.0 1195.0,752.0 1195.0,770.0 831.0,956.0" fill="#617258" stroke="#111" stroke-width="1"/>
<polygon points="823.0,935.0 831.0,934.0 831.0,956.0 823.0,950.0" fill="#74886e" stroke="#111" stroke-width=".8"/>
<linearGradient id="rfg" x1="0" y1="0" x2="1" y2="0"><stop offset="0" stop-color="#3a4638"/><stop offset="1" stop-color="#4a5946"/></linearGradient>
<polygon points="835.0,903.0 1198.0,722.0 1197.0,753.0 835.0,934.0" fill="url(#rfg)" stroke="#111" stroke-width="1"/>
<polygon points="835.0,922.0 1197.0,741.0 1197.0,753.0 835.0,934.0" fill="#62735c" stroke="#222" stroke-width=".6"/>
<defs><linearGradient id="cyl657" x1="0" y1="0" x2="1" y2="0"><stop offset="0" stop-color="#7d8f77"/><stop offset=".3" stop-color="#a3b39b"/><stop offset=".7" stop-color="#7a8c73"/><stop offset="1" stop-color="#5f705a"/></linearGradient></defs>
<path d="M642,716 V780 A15,8 0 0 0 672,780 V716Z" fill="url(#cyl657)" opacity=".8" stroke="#4a5846" stroke-width=".7"/>
<defs><linearGradient id="cyl1148" x1="0" y1="0" x2="1" y2="0"><stop offset="0" stop-color="#7d8f77"/><stop offset=".3" stop-color="#a3b39b"/><stop offset=".7" stop-color="#7a8c73"/><stop offset="1" stop-color="#5f705a"/></linearGradient></defs>
<path d="M1133,717 V772 A15,8 0 0 0 1163,772 V717Z" fill="url(#cyl1148)" opacity=".8" stroke="#4a5846" stroke-width=".7"/>
<defs><linearGradient id="cyl839" x1="0" y1="0" x2="1" y2="0"><stop offset="0" stop-color="#7d8f77"/><stop offset=".3" stop-color="#a3b39b"/><stop offset=".7" stop-color="#7a8c73"/><stop offset="1" stop-color="#5f705a"/></linearGradient></defs>
<path d="M824,871 V932 A15,8 0 0 0 854,932 V871Z" fill="url(#cyl839)" opacity=".8" stroke="#4a5846" stroke-width=".7"/>
<linearGradient id="tfg" x1="0" y1="0" x2="1" y2="1"><stop offset="0" stop-color="#7d9078"/><stop offset="1" stop-color="#7a8e75"/></linearGradient>
<polygon points="972.0,528.0 1198.0,722.0 835.0,903.0 607.0,710.0 647.6,690.0 695.0,676.0 767.0,643.0 845.0,598.0 845.0,591.0" fill="url(#tfg)" stroke="#111" stroke-width="1"/>
<polygon points="607,710 647.6,690 695,676 767,643 845,598 845,591" fill="#9aa8a0" opacity=".0"/>
<path d="M845,593 L877,622" stroke="#111" stroke-width=".9"/>
<path d="M877,622 L1073,792" stroke="#2a322a" stroke-width=".6"/>
<path d="M1042,761 L1073,792" stroke="#111" stroke-width=".9"/>
<path d="M648,690 L833,852" stroke="#2a322a" stroke-width=".6"/>
<polygon points="845.0,593.0 972.0,528.0 1010.0,560.0 877.0,622.0" fill="#71846c" opacity=".6"/>
<path d="M666.6,707.5 C669.4,698.9 680.1,688.2 697.0,679.1 C714.0,670.0 744.6,659.7 768.4,652.9 C792.2,646.1 821.6,643.4 839.8,638.2 C858.0,632.9 865.7,628.6 877.6,621.4 C889.5,614.2 897.8,601.8 911.2,595.1 C924.7,588.5 942.7,582.5 958.5,581.5 C974.2,580.4 993.8,583.8 1005.7,588.8 C1017.6,593.9 1025.5,604.1 1029.9,611.9 C1034.3,619.8 1033.9,628.2 1032.0,636.1 C1030.1,644.0 1026.6,653.4 1018.3,659.2 C1010.1,665.0 994.2,667.2 982.6,670.7 C971.1,674.2 961.6,673.7 949.0,680.2 C936.4,686.7 920.5,700.0 907.0,709.6 C893.6,719.2 880.4,730.9 868.2,737.9 C855.9,744.9 845.4,747.7 833.5,751.6 C821.6,755.4 809.9,759.8 796.8,761.0 C783.7,762.3 769.3,760.0 754.8,758.9 C740.3,757.9 722.1,759.5 709.6,754.7 C697.2,750.0 687.4,738.5 680.2,730.6 C673.1,722.7 663.8,716.1 666.6,707.5 Z" fill="none" stroke="#1a201a" stroke-width=".8"/>
<path d="M676.0,706.0 C678.7,697.8 688.8,687.7 705.0,679.0 C721.2,670.3 750.3,660.5 773.0,654.0 C795.7,647.5 823.7,645.0 841.0,640.0 C858.3,635.0 865.7,630.8 877.0,624.0 C888.3,617.2 896.2,605.3 909.0,599.0 C921.8,592.7 939.0,587.0 954.0,586.0 C969.0,585.0 987.7,588.2 999.0,593.0 C1010.3,597.8 1017.8,607.5 1022.0,615.0 C1026.2,622.5 1025.8,630.5 1024.0,638.0 C1022.2,645.5 1018.8,654.5 1011.0,660.0 C1003.2,665.5 988.0,667.7 977.0,671.0 C966.0,674.3 957.0,673.8 945.0,680.0 C933.0,686.2 917.8,698.8 905.0,708.0 C892.2,717.2 879.7,728.3 868.0,735.0 C856.3,741.7 846.3,744.3 835.0,748.0 C823.7,751.7 812.5,755.8 800.0,757.0 C787.5,758.2 773.8,756.0 760.0,755.0 C746.2,754.0 728.8,755.5 717.0,751.0 C705.2,746.5 695.8,735.5 689.0,728.0 C682.2,720.5 673.3,714.2 676.0,706.0 Z" fill="#6c7f67" stroke="#0a0a0a" stroke-width="1.6"/>
<path d="M683.5,704.8 C686.1,697.0 695.9,687.2 711.4,678.9 C726.9,670.6 754.9,661.1 776.7,654.9 C798.4,648.7 825.3,646.3 841.9,641.5 C858.6,636.7 865.6,632.7 876.5,626.1 C887.4,619.5 894.9,608.2 907.2,602.1 C919.5,596.0 936.0,590.6 950.4,589.6 C964.8,588.7 982.7,591.7 993.6,596.3 C1004.5,601.0 1011.7,610.3 1015.7,617.5 C1019.7,624.7 1019.4,632.3 1017.6,639.5 C1015.9,646.7 1012.7,655.4 1005.1,660.7 C997.6,665.9 983.1,668.0 972.5,671.2 C961.9,674.4 953.3,673.9 941.8,679.9 C930.3,685.8 915.7,697.9 903.4,706.7 C891.1,715.5 879.1,726.3 867.9,732.7 C856.7,739.1 847.1,741.6 836.2,745.1 C825.3,748.7 814.6,752.7 802.6,753.8 C790.6,754.9 777.5,752.8 764.2,751.9 C750.9,750.9 734.3,752.3 722.9,748.0 C711.5,743.7 702.6,733.1 696.0,725.9 C689.5,718.7 681.0,712.7 683.5,704.8 Z" fill="none" stroke="#161a16" stroke-width="7" stroke-dasharray="1.4 5" opacity=".85"/>
<path d="M690.1,703.8 C692.6,696.2 702.0,686.8 717.0,678.8 C731.9,670.8 758.9,661.7 779.9,655.7 C800.8,649.7 826.7,647.4 842.8,642.7 C858.8,638.1 865.6,634.2 876.1,627.9 C886.5,621.6 893.8,610.7 905.7,604.8 C917.5,598.9 933.4,593.7 947.3,592.8 C961.2,591.9 978.4,594.8 988.9,599.3 C999.4,603.7 1006.3,612.7 1010.2,619.6 C1014.0,626.5 1013.7,633.9 1012.0,640.9 C1010.3,647.8 1007.2,656.1 1000.0,661.2 C992.8,666.3 978.7,668.3 968.6,671.4 C958.4,674.5 950.1,674.0 939.0,679.7 C927.9,685.4 913.8,697.1 902.0,705.6 C890.1,714.1 878.5,724.4 867.7,730.6 C856.9,736.8 847.7,739.2 837.2,742.6 C826.7,746.0 816.4,749.9 804.8,751.0 C793.3,752.0 780.6,750.0 767.8,749.1 C755.0,748.2 739.0,749.6 728.1,745.4 C717.1,741.2 708.5,731.1 702.2,724.1 C695.8,717.2 687.7,711.3 690.1,703.8 Z" fill="none" stroke="#111" stroke-width="1.2"/>
<path d="M690.0,715.0 C693.8,707.5 711.3,694.5 728.0,688.0 C744.7,681.5 771.2,679.0 790.0,676.0 C808.8,673.0 825.0,675.7 841.0,670.0 C857.0,664.3 871.0,651.2 886.0,642.0 C901.0,632.8 915.8,620.2 931.0,615.0 C946.2,609.8 965.7,608.7 977.0,611.0 C988.3,613.3 996.0,622.3 999.0,629.0 C1002.0,635.7 1000.7,645.0 995.0,651.0 C989.3,657.0 975.0,661.5 965.0,665.0 C955.0,668.5 945.8,667.0 935.0,672.0 C924.2,677.0 911.7,686.7 900.0,695.0 C888.3,703.3 875.0,715.7 865.0,722.0 C855.0,728.3 850.8,729.7 840.0,733.0 C829.2,736.3 816.7,740.7 800.0,742.0 C783.3,743.3 755.8,742.5 740.0,741.0 C724.2,739.5 713.3,737.3 705.0,733.0 C696.7,728.7 686.2,722.5 690.0,715.0 Z" fill="#7b8f76" stroke="#0a0a0a" stroke-width="1.6"/>
<path d="M695.0,714.0 C698.8,706.7 715.7,694.1 731.9,687.8 C748.1,681.5 773.8,679.1 792.0,676.2 C810.3,673.3 826.0,675.9 841.5,670.4 C857.0,664.9 870.6,652.1 885.2,643.2 C899.7,634.3 914.1,622.0 928.8,617.0 C943.5,612.0 962.4,610.9 973.4,613.1 C984.4,615.4 991.9,624.1 994.8,630.6 C997.7,637.1 996.4,646.1 990.9,651.9 C985.4,657.8 971.5,662.1 961.8,665.5 C952.1,668.9 943.2,667.5 932.7,672.3 C922.2,677.2 910.1,686.5 898.7,694.6 C887.4,702.7 874.5,714.7 864.8,720.8 C855.1,727.0 851.1,728.2 840.5,731.5 C830.0,734.7 817.9,738.9 801.7,740.2 C785.6,741.5 758.9,740.7 743.5,739.2 C728.2,737.8 717.7,735.7 709.6,731.5 C701.5,727.3 691.3,721.3 695.0,714.0 Z" fill="none" stroke="#c8d8c0" stroke-width="1.4" opacity=".6"/>
<path d="M701.8,712.7 C705.3,705.7 721.6,693.6 737.1,687.6 C752.6,681.6 777.2,679.2 794.8,676.4 C812.3,673.7 827.3,676.1 842.2,670.9 C857.1,665.6 870.1,653.3 884.0,644.8 C898.0,636.3 911.8,624.5 925.9,619.7 C940.0,614.9 958.1,613.8 968.7,616.0 C979.2,618.2 986.3,626.5 989.1,632.7 C991.9,638.9 990.7,647.6 985.4,653.2 C980.1,658.8 966.8,663.0 957.5,666.2 C948.2,669.5 939.7,668.1 929.6,672.7 C919.5,677.4 907.9,686.4 897.1,694.1 C886.2,701.9 873.8,713.3 864.5,719.2 C855.2,725.1 851.3,726.4 841.3,729.5 C831.2,732.6 819.6,736.6 804.1,737.8 C788.6,739.1 763.0,738.3 748.3,736.9 C733.5,735.5 723.5,733.5 715.7,729.5 C708.0,725.4 698.2,719.7 701.8,712.7 Z" fill="none" stroke="#222" stroke-width=".6"/>
<path d="M790.8,821.9 C792.4,811.7 800.1,793.9 810.7,783.0 C821.4,772.2 838.4,764.5 854.8,756.8 C871.3,749.1 891.9,742.9 909.4,736.8 C926.9,730.7 944.4,727.0 959.8,720.0 C975.2,713.0 989.6,703.9 1001.8,694.8 C1014.1,685.7 1021.8,672.2 1033.3,665.4 C1044.9,658.6 1058.7,652.8 1071.1,653.9 C1083.6,654.9 1099.7,664.2 1107.9,671.7 C1116.1,679.2 1121.2,689.6 1120.5,699.0 C1119.8,708.5 1114.0,720.5 1103.7,728.4 C1093.4,736.3 1072.4,740.3 1058.5,746.3 C1044.7,752.2 1029.1,757.8 1020.7,764.1 C1012.3,770.4 1013.6,774.4 1008.1,784.1 C1002.7,793.7 998.5,810.1 988.2,821.9 C977.9,833.6 963.7,847.4 946.2,854.4 C928.7,861.4 901.9,863.2 883.2,863.9 C864.5,864.6 847.5,861.9 833.8,858.6 C820.2,855.3 808.5,850.0 801.3,843.9 C794.1,837.8 789.2,832.0 790.8,821.9 Z" fill="none" stroke="#1a201a" stroke-width=".8"/>
<path d="M799.0,819.0 C800.5,809.3 807.8,792.3 818.0,782.0 C828.2,771.7 844.3,764.3 860.0,757.0 C875.7,749.7 895.3,743.8 912.0,738.0 C928.7,732.2 945.3,728.7 960.0,722.0 C974.7,715.3 988.3,706.7 1000.0,698.0 C1011.7,689.3 1019.0,676.5 1030.0,670.0 C1041.0,663.5 1054.2,658.0 1066.0,659.0 C1077.8,660.0 1093.2,668.8 1101.0,676.0 C1108.8,683.2 1113.7,693.0 1113.0,702.0 C1112.3,711.0 1106.8,722.5 1097.0,730.0 C1087.2,737.5 1067.2,741.3 1054.0,747.0 C1040.8,752.7 1026.0,758.0 1018.0,764.0 C1010.0,770.0 1011.2,773.8 1006.0,783.0 C1000.8,792.2 996.8,807.8 987.0,819.0 C977.2,830.2 963.7,843.3 947.0,850.0 C930.3,856.7 904.8,858.3 887.0,859.0 C869.2,859.7 853.0,857.2 840.0,854.0 C827.0,850.8 815.8,845.8 809.0,840.0 C802.2,834.2 797.5,828.7 799.0,819.0 Z" fill="#6c7f67" stroke="#0a0a0a" stroke-width="1.6"/>
<path d="M805.6,816.7 C807.0,807.4 814.1,791.1 823.8,781.2 C833.6,771.3 849.1,764.2 864.1,757.2 C879.2,750.1 898.1,744.5 914.1,738.9 C930.1,733.3 946.1,730.0 960.1,723.6 C974.2,717.2 987.3,708.9 998.5,700.5 C1009.7,692.2 1016.8,679.9 1027.3,673.7 C1037.9,667.4 1050.5,662.1 1061.9,663.1 C1073.3,664.1 1088.0,672.5 1095.5,679.4 C1103.0,686.3 1107.7,695.7 1107.0,704.4 C1106.4,713.0 1101.1,724.1 1091.7,731.3 C1082.2,738.5 1063.0,742.1 1050.4,747.6 C1037.7,753.0 1023.5,758.1 1015.8,763.9 C1008.1,769.7 1009.3,773.3 1004.3,782.1 C999.3,790.9 995.5,806.0 986.1,816.7 C976.6,827.4 963.7,840.1 947.7,846.5 C931.7,852.9 907.2,854.5 890.1,855.1 C872.9,855.7 857.4,853.3 844.9,850.3 C832.5,847.3 821.7,842.5 815.2,836.9 C808.6,831.3 804.1,826.0 805.6,816.7 Z" fill="none" stroke="#161a16" stroke-width="7" stroke-dasharray="1.4 5" opacity=".85"/>
<path d="M811.3,814.7 C812.7,805.7 819.5,790.0 828.9,780.5 C838.3,770.9 853.3,764.1 867.8,757.3 C882.2,750.6 900.4,745.2 915.9,739.8 C931.3,734.4 946.7,731.1 960.3,725.0 C973.8,718.8 986.5,710.8 997.3,702.8 C1008.0,694.7 1014.8,682.9 1025.0,676.9 C1035.2,670.9 1047.4,665.8 1058.3,666.7 C1069.2,667.6 1083.4,675.8 1090.7,682.4 C1097.9,689.0 1102.4,698.1 1101.8,706.5 C1101.2,714.8 1096.1,725.4 1087.0,732.4 C1077.9,739.3 1059.4,742.8 1047.2,748.1 C1035.0,753.3 1021.3,758.3 1013.9,763.8 C1006.5,769.4 1007.6,772.9 1002.8,781.4 C998.0,789.9 994.3,804.4 985.2,814.7 C976.1,825.0 963.6,837.2 948.2,843.4 C932.8,849.5 909.2,851.1 892.7,851.7 C876.2,852.3 861.3,850.0 849.3,847.1 C837.2,844.1 826.9,839.5 820.6,834.1 C814.3,828.7 809.9,823.6 811.3,814.7 Z" fill="none" stroke="#111" stroke-width="1.2"/>
<path d="M828.0,830.0 C828.8,821.7 836.3,804.7 845.0,795.0 C853.7,785.3 865.8,779.2 880.0,772.0 C894.2,764.8 914.2,758.2 930.0,752.0 C945.8,745.8 961.7,741.7 975.0,735.0 C988.3,728.3 998.8,719.8 1010.0,712.0 C1021.2,704.2 1030.7,691.0 1042.0,688.0 C1053.3,685.0 1070.8,689.3 1078.0,694.0 C1085.2,698.7 1087.0,709.2 1085.0,716.0 C1083.0,722.8 1074.0,730.2 1066.0,735.0 C1058.0,739.8 1047.0,740.2 1037.0,745.0 C1027.0,749.8 1014.3,756.2 1006.0,764.0 C997.7,771.8 993.7,782.5 987.0,792.0 C980.3,801.5 976.7,812.7 966.0,821.0 C955.3,829.3 938.2,837.2 923.0,842.0 C907.8,846.8 888.8,849.5 875.0,850.0 C861.2,850.5 847.8,848.3 840.0,845.0 C832.2,841.7 827.2,838.3 828.0,830.0 Z" fill="#7b8f76" stroke="#0a0a0a" stroke-width="1.6"/>
<path d="M832.1,828.2 C832.9,820.1 840.1,803.6 848.5,794.2 C857.0,784.9 868.8,778.9 882.5,771.9 C896.2,765.0 915.6,758.5 931.0,752.5 C946.4,746.6 961.7,742.5 974.6,736.0 C987.6,729.6 997.8,721.3 1008.6,713.7 C1019.4,706.1 1028.6,693.4 1039.6,690.5 C1050.6,687.5 1067.6,691.7 1074.6,696.3 C1081.5,700.8 1083.3,711.0 1081.3,717.6 C1079.4,724.2 1070.7,731.4 1062.9,736.0 C1055.2,740.7 1044.5,741.1 1034.8,745.7 C1025.1,750.4 1012.8,756.6 1004.7,764.2 C996.6,771.8 992.8,782.1 986.3,791.3 C979.8,800.6 976.3,811.4 965.9,819.5 C955.6,827.5 938.9,835.1 924.2,839.8 C909.5,844.5 891.1,847.1 877.6,847.6 C864.2,848.1 851.3,846.0 843.7,842.7 C836.1,839.5 831.2,836.3 832.1,828.2 Z" fill="none" stroke="#c8d8c0" stroke-width="1.4" opacity=".6"/>
<path d="M837.5,825.8 C838.2,818.0 845.2,802.2 853.3,793.2 C861.3,784.3 872.6,778.5 885.8,771.9 C899.0,765.2 917.6,759.0 932.3,753.3 C947.0,747.5 961.8,743.6 974.2,737.4 C986.6,731.2 996.3,723.3 1006.7,716.1 C1017.1,708.8 1025.9,696.5 1036.5,693.7 C1047.0,690.9 1063.3,695.0 1070.0,699.3 C1076.6,703.7 1078.3,713.4 1076.5,719.8 C1074.6,726.1 1066.2,732.9 1058.8,737.4 C1051.4,741.9 1041.1,742.2 1031.8,746.7 C1022.5,751.2 1010.7,757.1 1003.0,764.4 C995.2,771.7 991.5,781.6 985.3,790.5 C979.1,799.3 975.7,809.7 965.8,817.4 C955.9,825.2 939.9,832.5 925.8,837.0 C911.7,841.4 894.0,843.9 881.2,844.4 C868.3,844.9 855.9,842.8 848.6,839.7 C841.3,836.6 836.7,833.5 837.5,825.8 Z" fill="none" stroke="#222" stroke-width=".6"/>
<g fill="none" stroke="#1a1a1a" stroke-width="3" stroke-dasharray="1.6 2.2">
<polygon points="722.0,712.0 766.0,674.0 840.0,668.0 844.0,716.0 790.0,738.0 736.0,728.0"/>
<polygon points="861.0,807.0 918.0,776.0 978.0,783.0 958.0,832.0 896.0,852.0"/>
</g>
<g fill="none" stroke="#111" stroke-width=".8">
<path d="M722,722 L790,744 L848,720 L846,664"/><path d="M861,818 L896,860 L964,838 L986,780"/>
</g>
<polygon points="735.0,706.0 769.0,683.0 832.0,676.0 832.0,706.0 784.0,726.0 746.0,715.0" fill="url(#meshp)"/>
<polygon points="952.0,624.0 981.0,624.0 995.0,645.0 968.0,660.0 956.0,645.0" fill="url(#meshp)"/>
<polygon points="887.0,811.0 923.0,789.0 968.0,796.0 951.0,826.0 894.0,845.0" fill="url(#meshp)"/>
<polygon points="1016.0,707.0 1032.0,700.0 1080.0,711.0 1070.0,730.0 1054.0,726.0" fill="url(#meshp)"/>
<ellipse cx="902" cy="729" rx="8" ry="5.5" fill="#8a9c84" stroke="#111" stroke-width=".9"/><path d="M897,705 L897,725 M860,770 L862,745 L897,727 M910,732 L935,735" stroke="#111" stroke-width=".8" fill="none"/>
<ellipse cx="955" cy="700" rx="6" ry="4" fill="#8a9c84" stroke="#111" stroke-width=".8"/><path d="M943,678 Q925,690 936,705 Q950,715 975,708" fill="none" stroke="#111" stroke-width=".9"/>
<g fill="#4f5e4c" opacity=".75" font-family="Liberation Sans" font-weight="bold" font-size="11">
<text transform="translate(1004,594) rotate(41) scale(-1,1)" text-anchor="middle">ZONAS</text>
<text transform="translate(1073,653) rotate(40) scale(-1,1)" text-anchor="middle">MOLDE2014</text>
<text transform="translate(1126,698) rotate(40) scale(-1,1)" text-anchor="middle">14</text>
</g>
<ellipse cx="968" cy="574" rx="16" ry="9" fill="#95a78f" opacity=".45"/>
<ellipse cx="968" cy="559" rx="18.5" ry="12.5" fill="#f0b418" stroke="#111" stroke-width="1.3"/>
<ellipse cx="968" cy="560" rx="12" ry="8" fill="url(#bushg)" stroke="#222" stroke-width="1"/>
<ellipse cx="657" cy="731" rx="16" ry="9" fill="#95a78f" opacity=".45"/>
<ellipse cx="657" cy="716" rx="18.5" ry="12.5" fill="#f0b418" stroke="#111" stroke-width="1.3"/>
<ellipse cx="657" cy="717" rx="12" ry="8" fill="url(#bushg)" stroke="#222" stroke-width="1"/>
<ellipse cx="1148" cy="732" rx="16" ry="9" fill="#95a78f" opacity=".45"/>
<ellipse cx="1148" cy="717" rx="18.5" ry="12.5" fill="#f0b418" stroke="#111" stroke-width="1.3"/>
<ellipse cx="1148" cy="718" rx="12" ry="8" fill="url(#bushg)" stroke="#222" stroke-width="1"/>
<ellipse cx="839" cy="886" rx="16" ry="9" fill="#95a78f" opacity=".45"/>
<ellipse cx="839" cy="871" rx="18.5" ry="12.5" fill="#f0b418" stroke="#111" stroke-width="1.3"/>
<ellipse cx="839" cy="872" rx="12" ry="8" fill="url(#bushg)" stroke="#222" stroke-width="1"/></svg></div>
<div id="status" class="a">
<div class="t" style="left:6px;top:8px;color:#222">选择命令或实体</div>
<div class="a" style="left:1263px;top:4px;width:1px;height:24px;background:#8e9399"></div>
<div class="a" style="left:1271px;top:5px;width:23px;height:21px;background:#fde58e;border:1px solid #e3b33a"></div>
<svg class="ic" style="left:1275px;top:8px" width="15" height="15"><rect x=".5" y=".5" width="14" height="14" fill="#e8f0f8" stroke="#4a78b0"/><rect x=".5" y=".5" width="14" height="3" fill="#4a88d0"/><path d="M3 5 V13" stroke="#333" stroke-width="1" stroke-dasharray="1 1"/><path d="M6 6 H12 M9 6 V13" stroke="#c81818" stroke-width="2"/></svg>
<svg class="ic" style="left:1303px;top:8px" width="15" height="15"><rect x=".5" y=".5" width="14" height="14" fill="#e8f0f8" stroke="#4a78b0"/><rect x=".5" y=".5" width="14" height="3" fill="#4a88d0"/><path d="M3 6 H12 M3 8.5 H12 M3 11 H10" stroke="#4a6080" stroke-width="1"/></svg>
</div>
<div class="a" style="left:0;top:0;width:1680px;height:1008px;pointer-events:none">
<div class="a" style="left:262px;top:193px;width:1px;height:787px;background:#b8bdc5"></div>
<div class="a" style="left:262px;top:193px;width:4px;height:1px;background:#b8bdc5"></div>
<div class="a" style="left:507px;top:193px;width:1173px;height:1px;background:#b8bdc5"></div>
<svg class="ic" style="left:694px;top:200px" width="15" height="18" viewBox="0 0 15 18"><path d="M1 1 H12 L13 3 V17 H3 L1 15Z" fill="#1a6fa0"/><rect x="1" y="1" width="11" height="15" fill="#1e80b8"/><circle cx="7.5" cy="4" r="1.5" fill="#fff"/><path d="M7 6 L5 10 L3 14 M7 6 L8 10 L11 13 M6 8 L10 9" stroke="#fff" stroke-width="1.5" fill="none"/></svg>
<svg class="ic" style="left:720px;top:201px" width="17" height="16" viewBox="0 0 17 16"><path d="M1 12 L11 2 L15 6 L5 16Z" fill="#f0f0f0" stroke="#9a9a9a" stroke-width=".5"/><path d="M11 2 L13 0 L17 4 L15 6Z" fill="#e8c030"/><path d="M1 12 L4.5 8.5 L8.5 12.5 L5 16Z" fill="#d81e1e"/></svg>
<svg class="ic" style="left:745px;top:200px" width="19" height="18" viewBox="0 0 19 18"><path d="M1 7 L9 4 L18 7 V13 L10 17 L1 13Z" fill="#9ad8f0" stroke="#0c6a93" stroke-width=".5"/><path d="M1 7 L9 4 L18 7 L10 10Z" fill="#f3e03a"/><path d="M10 10 L18 7 V13 L10 17Z" fill="#1b8fc2"/><path d="M9 7 V0" stroke="#3a9a3a" stroke-width="1.4"/></svg>
<svg class="ic" style="left:771px;top:200px" width="19" height="18" viewBox="0 0 19 18"><path d="M1 5 L10 1 L18 4 V13 L9 17 L1 14Z" fill="#1b8fc2"/><path d="M1 5 L10 1 L18 4 L9 8Z" fill="#5cc6ec"/><path d="M1 5 L9 8 V17 L1 14Z" fill="#8ad6ef"/><ellipse cx="9" cy="17.5" rx="7" ry=".8" fill="#555" opacity=".4"/></svg>
<svg class="ic" style="left:795px;top:207px" width="6" height="4"><path d="M0 0 H6 L3 3.5Z" fill="#333"/></svg>
<svg class="ic" style="left:809px;top:200px" width="19" height="18" viewBox="0 0 19 18"><path d="M1 5 L10 1 L18 4 V13 L9 17 L1 14Z M1 5 L9 8 L18 4 M9 8 V17" fill="#fff" stroke="#3a8ab8" stroke-width=".8"/></svg>
<svg class="ic" style="left:833px;top:207px" width="6" height="4"><path d="M0 0 H6 L3 3.5Z" fill="#333"/></svg>
<svg class="ic" style="left:847px;top:201px" width="18" height="16" viewBox="0 0 18 16"><rect x=".5" y=".5" width="17" height="15" fill="#1ca0d8" stroke="#0c6a93"/><path d="M9 .5 V7 H17.5" fill="none" stroke="#0c6a93" stroke-width="1"/></svg>
<svg class="ic" style="left:871px;top:207px" width="6" height="4"><path d="M0 0 H6 L3 3.5Z" fill="#333"/></svg>
<svg class="ic" style="left:885px;top:200px" width="18" height="18" viewBox="0 0 18 18"><rect x=".5" y=".5" width="17" height="17" fill="#dfe8ee" stroke="#3a9ad0"/><circle cx="9" cy="9" r="6" fill="#f5d040" stroke="#8a8a8a" stroke-width="1.2"/><rect x="6" y="5" width="6" height="8" fill="#f0f0f0" stroke="#9a9a9a" stroke-width=".5"/></svg>
<svg class="ic" style="left:909px;top:207px" width="6" height="4"><path d="M0 0 H6 L3 3.5Z" fill="#333"/></svg>
<svg class="ic" style="left:923px;top:201px" width="18" height="16" viewBox="0 0 18 16"><rect x=".5" y=".5" width="17" height="15" fill="#f0f4f8" stroke="#7aa8c8"/><path d="M4 9 V4 Q4 3 5 3 H10 M14 7 V12 Q14 13 13 13 H8" fill="none" stroke="#7ac0e0" stroke-width="1" stroke-dasharray="1.5 1"/><rect x="3" y="10" width="4" height="3" fill="#1a6fa0"/></svg>
<svg class="ic" style="left:951px;top:200px" width="14" height="18" viewBox="0 0 14 18"><path d="M1 1 V14 M13 1 V14" stroke="#2a9ad0" stroke-width="2"/><path d="M2 6 H12" stroke="#2a9ad0" stroke-width="1"/><path d="M2 16 H12" stroke="#d82020" stroke-width="2"/></svg>
<svg class="ic" style="left:973px;top:207px" width="6" height="4"><path d="M0 0 H6 L3 3.5Z" fill="#333"/></svg>
<svg class="ic" style="left:987px;top:200px" width="18" height="17" viewBox="0 0 18 17"><rect x=".5" y=".5" width="17" height="13" fill="#8a8e92" stroke="#5a5e62"/><rect x="2" y="2" width="14" height="10" fill="#a8acb0"/><g fill="#1fa0d8"><circle cx="9" cy="5" r="2.2"/><circle cx="6" cy="9" r="2.2"/><circle cx="12" cy="9" r="2.2"/></g><rect x="6" y="14" width="6" height="2" fill="#8a8e92"/></svg>
<svg class="ic" style="left:1011px;top:207px" width="6" height="4"><path d="M0 0 H6 L3 3.5Z" fill="#555"/></svg>
<div class="a" style="left:1026px;top:201px;width:17px;height:16px;background:#000;border:1px solid #333"></div>
<div class="a" style="left:1052px;top:201px;width:17px;height:16px;background:#bde3f5;border:1px solid #3a1a10"></div>
<svg class="ic" style="left:1077px;top:201px" width="19" height="16" viewBox="0 0 19 16"><path d="M1 6 L10 2 L18 5 V9 L9 14 L1 10Z" fill="#1d9ccf"/><path d="M1 6 L10 2 L18 5 L9 9Z" fill="#3bc0c8"/><path d="M1 6 L4 2 L6 7Z" fill="#2a9aa8"/><path d="M2 10 L9 14 L17 9" fill="none" stroke="#c0d8e0" stroke-width="1"/></svg>
<svg class="ic" style="left:1101px;top:207px" width="6" height="4"><path d="M0 0 H6 L3 3.5Z" fill="#333"/></svg>
<div class="a" style="left:1112px;top:198px;width:140px;height:22px;background:#fff;border:1px solid #b9bfc6"></div>
<svg class="ic" style="left:1119px;top:202px" width="11" height="15" viewBox="0 0 11 15"><path d="M5.5 1 Q10 1 10 5.5 Q10 8 8 10 V11 H3 V10 Q1 8 1 5.5 Q1 1 5.5 1Z" fill="#fdf8d0" stroke="#d8c030" stroke-width="1.2"/><rect x="3" y="11" width="5" height="3" fill="#6a7a90"/></svg>
<svg class="ic" style="left:1134px;top:202px" width="15" height="15" viewBox="0 0 15 15"><rect x="0" y="0" width="3" height="3" fill="#f0e040"/><rect x="12" y="0" width="3" height="3" fill="#f0e040"/><rect x="0" y="12" width="3" height="3" fill="#f0e040"/><rect x="12" y="12" width="3" height="3" fill="#f0e040"/><circle cx="7.5" cy="7.5" r="6.3" fill="#f3dc40" stroke="#2a70c8" stroke-width="1.1"/></svg>
<div class="t" style="left:1152px;top:202px;color:#111;font-size:11px">Layer0000</div>
<svg class="ic" style="left:1240px;top:206px" width="7" height="4"><path d="M0 0 H7 L3.5 4Z" fill="#333"/></svg>
<div class="t" style="left:1590px;top:966px;color:#fff;font-size:22px;line-height:26px;font-weight:bold">中望3D</div>
<div class="a" style="left:1329px;top:985px;width:350px;height:22px;background:#fff;border:1px solid #b9bfc6"></div>
</div>

</body></html>
